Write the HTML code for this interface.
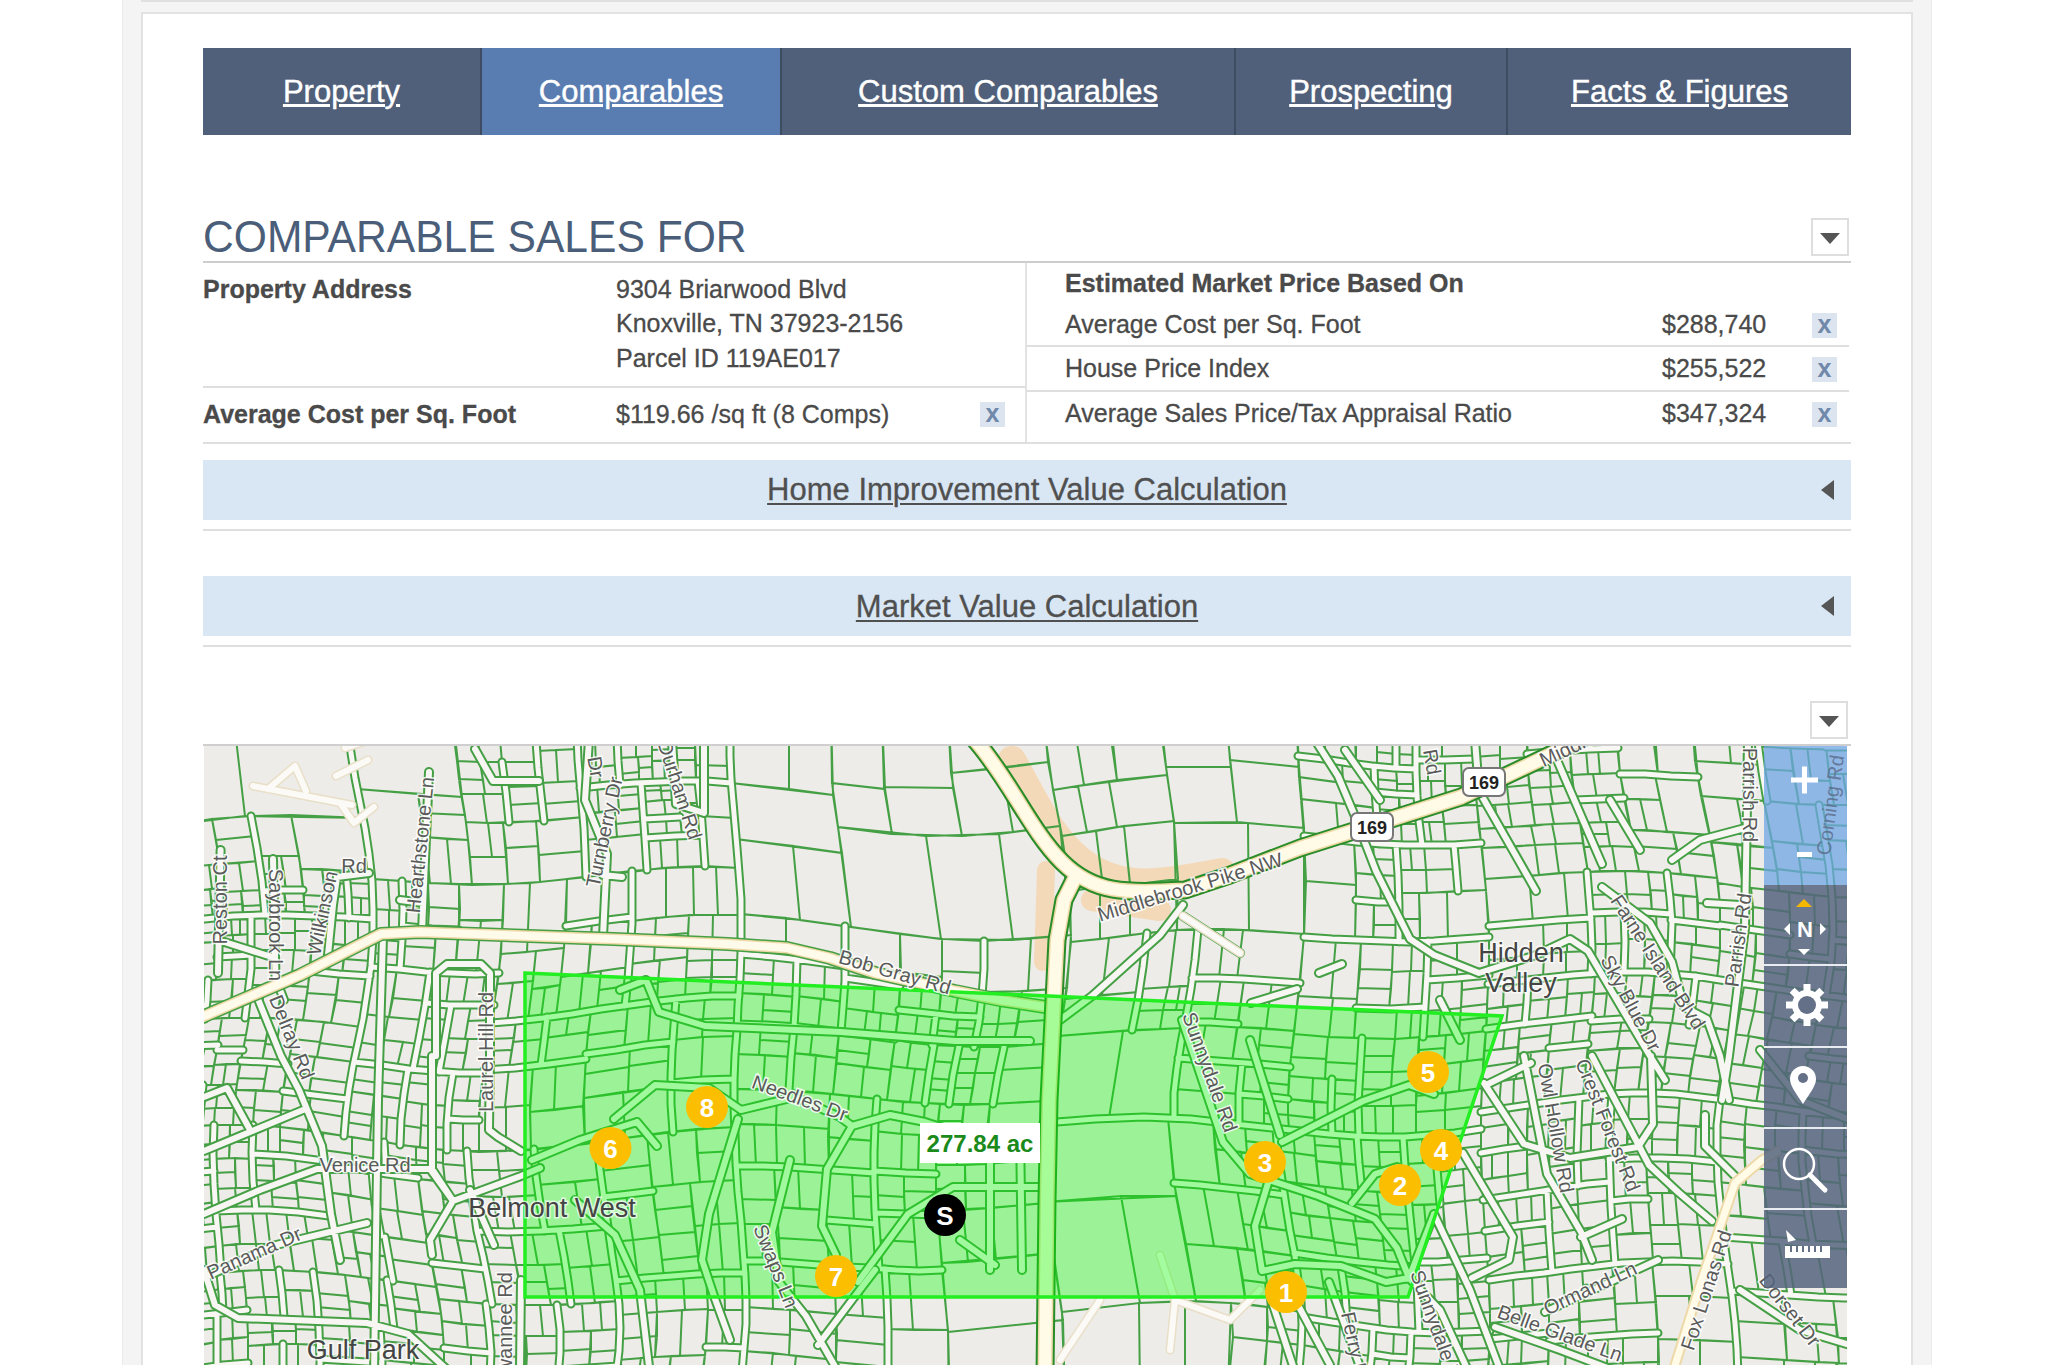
<!DOCTYPE html>
<html><head><meta charset="utf-8">
<style>
html,body{margin:0;padding:0;width:2048px;height:1365px;overflow:hidden;background:#fff;}
body{position:relative;font-family:"Liberation Sans",sans-serif;}
.a{position:absolute;}
.t{position:absolute;white-space:nowrap;line-height:1;}
.tab{position:absolute;top:48px;height:87px;background:#50607a;}
.tab span{position:absolute;left:0;right:0;top:27.5px;-webkit-text-stroke:0.4px #fff;text-align:center;font-size:31px;line-height:1;color:#fff;text-decoration:underline;text-decoration-thickness:2.5px;text-underline-offset:2px;}
.lbl{font-size:25px;color:#4a4a4a;-webkit-text-stroke:0.3px #4a4a4a;}
.b{font-weight:bold;}
.xb{position:absolute;width:25px;height:25px;background:#dbe4ef;}
.xb:after{content:"x";position:absolute;left:0;right:0;top:-1px;text-align:center;font:bold 25px/1 "Liberation Sans",sans-serif;color:#7088aa;}
.hl{position:absolute;height:2px;background:#dfdfdf;}
.acc{position:absolute;left:203px;width:1648px;height:60px;background:#d9e6f3;}
.acc span{position:absolute;left:0;right:0;top:0;text-align:center;font-size:31px;line-height:1;color:#505050;-webkit-text-stroke:0.3px #505050;text-decoration:underline;text-decoration-thickness:2px;text-underline-offset:3px;}
.acc i{position:absolute;left:1618px;top:20px;width:0;height:0;border-top:10px solid transparent;border-bottom:10px solid transparent;border-right:13px solid #555;}
.dd{position:absolute;width:34px;height:34px;border:2px solid #dedede;background:#fff;}
.dd:after{content:"";position:absolute;left:7px;top:13px;border-left:10px solid transparent;border-right:10px solid transparent;border-top:11px solid #555;}
</style></head>
<body>
<!-- outer frame -->
<div class="a" style="left:122px;top:0;width:1808px;height:1365px;background:#f4f4f4;border-left:1px solid #ebebeb;border-right:1px solid #ebebeb;"></div>
<div class="a" style="left:141px;top:0;width:1772px;height:2px;background:#e0e0e0;"></div>
<div class="a" style="left:141px;top:12px;width:1768px;height:1360px;background:#fff;border:2px solid #e2e2e2;"></div>

<!-- tabs -->
<div class="tab" style="left:203px;width:277px;"><span>Property</span></div>
<div class="a" style="left:480px;top:48px;width:2px;height:87px;background:#3e4c62;"></div>
<div class="tab" style="left:482px;width:298px;background:#5a7db1;"><span>Comparables</span></div>
<div class="a" style="left:780px;top:48px;width:2px;height:87px;background:#3e4c62;"></div>
<div class="tab" style="left:782px;width:452px;"><span>Custom Comparables</span></div>
<div class="a" style="left:1234px;top:48px;width:2px;height:87px;background:#3e4c62;"></div>
<div class="tab" style="left:1236px;width:270px;"><span>Prospecting</span></div>
<div class="a" style="left:1506px;top:48px;width:2px;height:87px;background:#3e4c62;"></div>
<div class="tab" style="left:1508px;width:343px;"><span>Facts &amp; Figures</span></div>

<!-- heading -->
<div class="t" style="left:203px;top:214.7px;font-size:44.6px;color:#4a5e7a;transform:scaleX(0.955);transform-origin:0 0;">COMPARABLE SALES FOR</div>
<div class="dd" style="left:1811px;top:218px;"></div>
<div class="hl" style="left:203px;top:261px;width:1648px;background:#cdcdcd;"></div>

<!-- left table -->
<div class="t lbl b" style="left:203px;top:276.5px;">Property Address</div>
<div class="t lbl" style="left:616px;top:276.5px;">9304 Briarwood Blvd</div>
<div class="t lbl" style="left:616px;top:311px;">Knoxville, TN 37923-2156</div>
<div class="t lbl" style="left:616px;top:345.5px;">Parcel ID 119AE017</div>
<div class="hl" style="left:203px;top:386px;width:823px;"></div>
<div class="t lbl b" style="left:203px;top:401.5px;">Average Cost per Sq. Foot</div>
<div class="t lbl" style="left:616px;top:401.5px;">$119.66 /sq ft (8 Comps)</div>
<div class="xb" style="left:980px;top:402px;"></div>
<div class="a" style="left:1025px;top:263px;width:2px;height:180px;background:#e2e2e2;"></div>

<!-- right table -->
<div class="t lbl b" style="left:1065px;top:271px;">Estimated Market Price Based On</div>
<div class="t lbl" style="left:1065px;top:312px;">Average Cost per Sq. Foot</div>
<div class="t lbl" style="left:1662px;top:312px;">$288,740</div>
<div class="xb" style="left:1812px;top:313px;"></div>
<div class="hl" style="left:1027px;top:345px;width:822px;"></div>
<div class="t lbl" style="left:1065px;top:356px;">House Price Index</div>
<div class="t lbl" style="left:1662px;top:356px;">$255,522</div>
<div class="xb" style="left:1812px;top:357px;"></div>
<div class="hl" style="left:1027px;top:390px;width:822px;"></div>
<div class="t lbl" style="left:1065px;top:400.5px;">Average Sales Price/Tax Appraisal Ratio</div>
<div class="t lbl" style="left:1662px;top:400.5px;">$347,324</div>
<div class="xb" style="left:1812px;top:402px;"></div>
<div class="hl" style="left:203px;top:442px;width:1648px;"></div>

<!-- accordions -->
<div class="acc" style="top:460px;"><span style="top:14px;">Home Improvement Value Calculation</span><i></i></div>
<div class="hl" style="left:203px;top:529px;width:1648px;"></div>
<div class="acc" style="top:576px;"><span style="top:14.5px;">Market Value Calculation</span><i></i></div>
<div class="hl" style="left:203px;top:645px;width:1648px;"></div>

<div class="dd" style="left:1810px;top:701px;"></div>
<div class="hl" style="left:203px;top:744px;width:1648px;background:#cfcfcf;"></div>

<!-- map -->
<!--MAPSTART-->
<svg class="a" style="left:0;top:0" width="2048" height="1365" viewBox="0 0 2048 1365">
<defs><clipPath id="mc"><rect x="204" y="746" width="1643" height="619"/></clipPath></defs>
<g clip-path="url(#mc)">
<rect x="204" y="746" width="1643" height="619" fill="#eeece8"/>
<path d="M1012 760C1035 800 1052 842 1088 866S1160 884 1222 872" stroke="#f3d9b8" stroke-width="28" fill="none" stroke-linecap="round"/>
<path d="M1046 870L1043 962" stroke="#f3d9b8" stroke-width="18" fill="none" stroke-linecap="round"/>
<path d="M1092 900L1160 910" stroke="#f3d9b8" stroke-width="22" fill="none" stroke-linecap="round"/>
<path d="M153 707L231 696L245 816L162 826ZM231 696L346 699L363 818L245 816ZM162 826L192 822L200 866L169 869ZM192 822L212 819L220 864L200 866ZM212 819L251 816L255 836L216 840ZM216 840L255 836L259 861L220 864ZM169 869L191 867L194 891L173 893ZM191 867L209 865L212 889L194 891ZM209 865L221 864L225 888L212 889ZM173 893L184 892L186 908L174 909ZM184 892L195 891L197 907L186 908ZM174 909L197 907L198 919L175 921ZM195 891L210 889L212 905L197 906ZM197 906L212 905L213 918L198 919ZM210 889L225 888L226 900L211 901ZM211 901L226 900L227 917L213 918ZM221 864L239 863L243 891L225 892ZM239 863L259 861L263 890L243 891ZM225 892L241 891L242 904L226 905ZM226 905L242 904L243 916L227 917ZM241 891L263 890L265 905L243 906ZM243 906L265 905L265 915L243 916ZM251 816L291 815L299 856L259 856ZM259 856L281 856L284 874L261 874ZM261 874L284 874L286 890L263 891ZM281 856L299 856L303 890L286 890ZM263 891L284 890L286 904L265 904ZM265 904L286 904L286 915L265 915ZM284 890L303 890L304 902L285 902ZM285 902L304 902L305 915L286 915ZM291 815L363 818L371 872L301 869ZM301 869L322 869L325 896L304 895ZM322 869L346 871L347 884L324 882ZM324 882L347 884L348 897L325 896ZM304 895L322 896L323 907L304 906ZM304 906L323 907L323 916L305 915ZM322 896L334 896L335 917L323 916ZM334 896L348 897L349 918L335 917ZM346 871L371 872L372 884L347 883ZM347 883L372 884L373 899L348 897ZM348 897L361 898L361 918L349 918ZM361 898L373 899L373 919L361 918ZM175 921L194 919L195 943L177 945ZM194 919L216 918L217 932L194 934ZM194 934L217 932L217 942L195 943ZM177 945L190 944L190 964L177 965ZM190 944L198 943L198 963L190 964ZM177 965L198 963L198 981L176 983ZM198 943L217 942L217 963L198 965ZM198 965L217 963L216 980L198 981ZM216 918L231 917L232 935L217 936ZM231 917L240 916L240 935L232 935ZM240 916L251 916L251 934L240 935ZM217 936L233 935L233 956L217 957ZM233 935L251 934L251 946L233 947ZM233 947L251 946L251 955L233 956ZM217 957L232 956L231 979L216 980ZM232 956L251 955L250 979L231 979ZM176 983L208 980L207 1003L175 1005ZM175 1005L207 1003L205 1019L173 1021ZM208 980L233 979L231 1001L207 1002ZM207 1002L231 1001L229 1018L205 1019ZM233 979L250 979L248 996L232 997ZM232 997L248 996L245 1018L229 1018ZM251 916L265 915L266 934L251 934ZM265 915L278 915L278 934L266 934ZM251 934L278 934L278 950L251 950ZM278 915L295 915L295 933L278 933ZM278 933L295 933L295 950L278 950ZM295 915L312 916L312 931L295 931ZM295 931L312 931L311 951L295 950ZM251 950L276 950L276 968L251 968ZM251 968L276 968L274 985L249 985ZM276 950L294 950L291 986L274 985ZM294 950L311 951L308 987L291 986ZM249 985L265 985L260 1018L245 1018ZM265 985L282 985L277 1018L260 1018ZM282 985L308 987L306 1001L280 999ZM280 999L306 1001L303 1020L277 1018ZM312 916L327 916L327 943L312 943ZM327 916L345 917L345 945L327 943ZM312 943L331 944L329 973L310 971ZM331 944L345 945L342 974L329 973ZM345 917L358 918L358 946L345 945ZM358 918L373 919L372 947L358 946ZM345 945L372 947L371 961L344 959ZM344 959L371 961L370 976L342 974ZM310 971L339 974L336 995L307 993ZM307 993L336 995L331 1023L303 1020ZM339 974L370 976L366 1003L336 1000ZM336 1000L366 1003L361 1027L331 1023ZM173 1021L197 1019L193 1046L169 1048ZM197 1019L222 1018L220 1031L195 1032ZM195 1032L220 1031L218 1045L193 1046ZM169 1048L195 1046L192 1065L167 1066ZM167 1066L180 1065L178 1087L164 1088ZM180 1065L192 1065L189 1086L178 1087ZM195 1046L205 1046L201 1066L192 1067ZM205 1046L218 1045L214 1066L201 1066ZM192 1067L214 1066L211 1085L189 1086ZM222 1018L249 1018L246 1035L219 1036ZM219 1036L246 1035L243 1050L217 1050ZM217 1050L243 1050L240 1064L214 1065ZM214 1065L226 1064L223 1085L211 1085ZM226 1064L240 1064L237 1084L223 1085ZM164 1088L183 1087L181 1108L163 1110ZM183 1087L203 1085L200 1106L181 1108ZM163 1110L180 1108L179 1128L162 1129ZM180 1108L200 1106L199 1126L179 1128ZM203 1085L218 1085L216 1108L200 1109ZM218 1085L237 1084L234 1108L216 1108ZM200 1109L215 1108L214 1125L199 1126ZM215 1108L234 1108L233 1125L214 1125ZM249 1018L270 1018L266 1041L245 1040ZM245 1040L266 1041L262 1062L241 1061ZM270 1018L281 1019L276 1045L265 1044ZM281 1019L297 1020L292 1046L276 1045ZM265 1044L292 1046L288 1064L262 1062ZM241 1061L268 1062L265 1079L238 1078ZM238 1078L265 1079L263 1091L236 1090ZM268 1062L288 1064L283 1092L263 1091ZM236 1090L256 1090L254 1108L234 1107ZM234 1107L254 1108L253 1125L233 1125ZM256 1090L283 1092L281 1112L254 1110ZM254 1110L281 1112L280 1127L253 1125ZM297 1020L324 1022L320 1042L293 1039ZM293 1039L320 1042L317 1057L290 1054ZM324 1022L361 1027L357 1048L320 1043ZM320 1043L357 1048L354 1062L317 1057ZM290 1054L315 1057L312 1075L286 1072ZM286 1072L312 1075L309 1094L283 1091ZM315 1057L354 1062L350 1083L311 1078ZM311 1078L350 1083L347 1099L309 1094ZM283 1091L311 1094L309 1113L281 1110ZM281 1110L309 1113L308 1130L280 1127ZM311 1094L347 1099L345 1117L309 1111ZM309 1111L345 1117L344 1136L308 1130ZM346 699L452 711L462 797L357 789ZM357 789L418 794L430 883L372 879ZM418 794L462 797L465 815L421 813ZM421 813L465 815L468 840L425 837ZM425 837L447 839L451 884L430 883ZM447 839L468 840L472 885L451 884ZM452 711L466 712L468 739L454 738ZM466 712L479 713L481 739L468 739ZM479 713L499 713L500 740L481 739ZM454 738L478 739L480 762L457 761ZM478 739L500 740L502 762L480 762ZM499 713L535 713L536 738L500 739ZM500 739L536 738L538 762L502 762ZM457 761L480 762L483 780L459 779ZM459 779L483 780L485 794L461 794ZM480 762L502 762L506 794L485 794ZM461 794L483 794L487 823L466 822ZM483 794L506 794L509 822L487 823ZM502 762L538 762L540 786L505 787ZM505 787L540 786L542 803L507 805ZM507 805L542 803L544 821L509 822ZM535 713L576 711L576 730L536 732ZM536 732L576 730L577 749L537 751ZM537 751L556 750L558 782L540 783ZM556 750L577 749L580 781L558 782ZM540 783L580 781L581 801L542 804ZM542 804L581 801L583 817L544 821ZM466 822L488 823L492 857L470 857ZM488 823L503 823L506 857L492 857ZM470 857L506 857L508 884L472 885ZM503 823L536 821L538 846L506 848ZM506 848L538 846L540 882L508 884ZM536 821L583 817L585 851L539 855ZM539 855L585 851L586 877L540 882ZM576 711L594 710L594 739L577 740ZM594 710L620 708L620 725L594 727ZM594 727L620 725L620 737L594 739ZM620 708L636 707L636 736L620 737ZM636 707L652 706L652 720L636 721ZM636 721L652 720L652 735L636 736ZM577 740L595 739L596 767L579 768ZM595 739L617 737L618 765L596 767ZM579 768L599 767L600 786L580 788ZM599 767L618 765L620 785L600 786ZM617 737L636 736L636 757L618 758ZM636 736L652 735L652 756L636 757ZM618 758L638 757L639 772L619 774ZM619 774L639 772L639 783L620 785ZM638 757L652 756L652 767L639 768ZM639 768L652 767L653 782L639 783ZM652 706L664 705L664 722L652 723ZM664 705L677 705L676 722L664 722ZM652 723L665 722L665 736L652 736ZM665 722L676 722L676 735L665 736ZM677 705L696 704L695 735L676 735ZM652 736L673 735L673 749L652 750ZM652 750L673 749L673 760L652 761ZM673 735L695 735L695 748L673 748ZM673 748L695 748L695 760L673 760ZM652 761L664 761L665 782L653 782ZM664 761L676 760L677 781L665 782ZM676 760L695 760L696 781L677 781ZM696 704L713 704L712 742L695 742ZM713 704L731 705L730 743L712 742ZM695 742L730 743L730 766L696 765ZM696 765L730 766L731 783L696 781ZM580 788L597 786L599 812L583 814ZM597 786L617 785L619 810L599 812ZM617 785L641 783L642 794L618 796ZM618 796L642 794L643 808L619 810ZM583 814L615 811L617 837L585 840ZM615 811L643 808L644 821L616 824ZM616 824L644 821L645 834L617 837ZM585 840L645 834L647 870L586 877ZM641 783L660 782L661 790L642 791ZM642 791L661 790L662 800L643 802ZM660 782L678 781L678 790L661 791ZM661 791L678 790L679 800L662 800ZM643 802L664 800L666 818L644 819ZM664 800L679 800L680 817L666 818ZM644 819L666 818L667 836L645 838ZM666 818L680 817L682 836L667 836ZM678 781L698 781L700 803L679 803ZM679 803L700 803L703 835L682 836ZM645 838L660 837L662 868L647 870ZM660 837L677 836L678 867L662 868ZM677 836L703 835L705 866L678 867ZM698 781L731 783L734 818L701 816ZM701 816L734 818L739 868L705 866ZM372 879L388 880L390 910L373 909ZM388 880L402 881L403 911L390 910ZM373 909L389 910L389 937L373 936ZM389 910L403 911L402 938L389 937ZM373 936L402 938L401 955L372 953ZM372 953L401 955L400 969L371 967ZM402 881L412 882L413 909L403 908ZM412 882L428 883L429 910L413 909ZM403 908L429 910L428 928L403 926ZM428 883L459 884L460 909L429 907ZM429 907L460 909L459 930L428 928ZM403 926L436 929L435 948L402 946ZM402 946L435 948L433 972L400 969ZM436 929L459 930L455 973L433 972ZM459 884L504 884L503 920L459 920ZM459 920L481 921L476 974L455 973ZM481 921L503 920L499 973L476 974ZM371 967L397 969L389 1017L364 1014ZM397 969L430 972L426 1001L393 998ZM393 998L426 1001L423 1020L389 1017ZM364 1014L388 1017L383 1046L358 1042ZM358 1042L383 1046L378 1065L354 1062ZM388 1017L423 1020L418 1044L384 1040ZM384 1040L403 1042L397 1067L378 1065ZM403 1042L418 1044L413 1069L397 1067ZM430 972L450 973L446 1005L426 1003ZM450 973L468 974L463 1005L446 1005ZM468 974L485 974L481 1005L463 1005ZM485 974L499 973L494 1005L481 1005ZM426 1003L451 1005L449 1020L423 1018ZM423 1018L449 1020L445 1041L419 1039ZM419 1039L445 1041L441 1059L415 1056ZM415 1056L441 1059L439 1072L413 1069ZM451 1005L471 1005L465 1039L445 1038ZM471 1005L494 1005L492 1020L468 1021ZM468 1021L492 1020L489 1039L465 1039ZM445 1038L468 1039L466 1053L442 1052ZM442 1052L466 1053L462 1073L439 1072ZM468 1039L489 1039L483 1073L462 1073ZM354 1062L383 1065L379 1083L351 1079ZM351 1079L379 1083L377 1095L348 1091ZM383 1065L408 1069L405 1085L379 1082ZM379 1082L405 1085L403 1099L377 1095ZM348 1091L374 1095L372 1115L346 1111ZM346 1111L372 1115L371 1126L345 1122ZM345 1122L371 1126L370 1140L344 1136ZM374 1095L403 1099L401 1119L372 1115ZM372 1115L387 1117L386 1142L370 1140ZM387 1117L401 1119L400 1145L386 1142ZM408 1069L435 1071L433 1085L406 1082ZM406 1082L433 1085L430 1105L403 1101ZM435 1071L453 1073L449 1106L430 1105ZM403 1101L422 1104L421 1128L401 1125ZM401 1125L421 1128L420 1147L400 1145ZM422 1104L435 1105L434 1127L421 1125ZM435 1105L449 1106L447 1128L434 1127ZM421 1125L435 1127L435 1149L420 1147ZM435 1127L447 1128L447 1150L435 1149ZM453 1073L471 1073L467 1101L449 1100ZM471 1073L483 1073L480 1101L467 1101ZM449 1100L480 1101L479 1120L448 1119ZM448 1119L463 1120L463 1151L447 1150ZM463 1120L479 1120L479 1152L463 1151ZM504 884L530 883L527 952L501 954ZM530 883L567 879L564 948L527 952ZM501 954L536 951L533 981L497 984ZM497 984L513 983L507 1022L491 1023ZM513 983L533 981L528 1020L507 1022ZM536 951L564 948L560 985L532 989ZM532 989L545 988L541 1018L528 1020ZM545 988L560 985L556 1016L541 1018ZM567 879L632 871L632 917L566 926ZM566 926L592 922L588 973L561 977ZM592 922L632 917L631 938L591 943ZM591 943L631 938L629 967L588 973ZM561 977L583 974L579 1013L556 1016ZM583 974L601 971L597 1010L579 1013ZM601 971L629 967L627 986L599 990ZM599 990L627 986L625 1006L597 1010ZM632 871L666 868L666 917L632 921ZM666 868L693 867L694 915L666 917ZM693 867L716 867L718 915L694 915ZM716 867L739 868L741 915L718 915ZM632 921L656 918L654 961L629 964ZM656 918L689 915L688 933L655 936ZM655 936L688 933L687 957L654 961ZM629 964L660 960L658 983L627 987ZM627 987L658 983L657 1001L625 1006ZM660 960L687 957L686 979L658 982ZM658 982L686 979L685 998L657 1001ZM689 915L713 915L712 960L687 961ZM713 915L741 915L741 960L712 960ZM687 961L712 960L712 977L686 978ZM686 978L712 977L710 996L685 998ZM712 960L741 960L740 977L711 977ZM711 977L740 977L739 996L710 996ZM491 1023L516 1021L514 1038L489 1039ZM489 1039L514 1038L512 1050L487 1051ZM487 1051L512 1050L509 1068L484 1070ZM516 1021L547 1017L544 1039L513 1042ZM513 1042L544 1039L541 1065L509 1068ZM547 1017L569 1014L566 1035L544 1038ZM569 1014L591 1011L588 1032L566 1035ZM544 1038L588 1032L586 1059L541 1065ZM484 1070L509 1068L505 1107L479 1108ZM509 1068L533 1066L530 1105L505 1107ZM479 1108L506 1107L506 1151L479 1152ZM506 1107L530 1105L531 1150L506 1151ZM533 1066L556 1063L554 1110L530 1112ZM556 1063L586 1059L583 1106L554 1110ZM530 1112L583 1106L585 1144L531 1150ZM591 1011L628 1005L626 1030L588 1035ZM588 1035L626 1030L624 1049L586 1054ZM628 1005L651 1002L648 1045L624 1049ZM651 1002L676 999L673 1042L648 1045ZM586 1054L630 1048L629 1067L585 1074ZM585 1074L629 1067L628 1092L584 1098ZM630 1048L673 1042L672 1060L629 1066ZM629 1066L672 1060L671 1086L628 1092ZM584 1098L623 1092L625 1138L585 1144ZM623 1092L671 1086L673 1132L625 1138ZM676 999L705 997L703 1019L674 1022ZM674 1022L703 1019L702 1037L673 1040ZM705 997L739 996L738 1018L703 1019ZM703 1019L738 1018L736 1036L702 1037ZM673 1040L703 1037L701 1080L671 1083ZM703 1037L736 1036L734 1079L701 1080ZM671 1083L703 1080L704 1129L673 1132ZM703 1080L734 1079L734 1127L704 1129ZM162 1129L177 1128L177 1152L161 1154ZM177 1128L192 1126L191 1151L177 1152ZM161 1154L191 1151L191 1173L161 1176ZM192 1126L214 1125L213 1144L191 1145ZM191 1145L213 1144L213 1159L191 1161ZM191 1161L213 1159L214 1171L191 1173ZM161 1176L191 1173L192 1196L162 1200ZM162 1200L192 1196L193 1211L163 1215ZM163 1215L193 1211L194 1230L164 1234ZM191 1173L214 1171L214 1184L192 1186ZM192 1186L214 1184L215 1202L193 1205ZM193 1205L202 1204L204 1229L194 1230ZM202 1204L215 1202L217 1227L204 1229ZM164 1234L179 1232L180 1257L166 1260ZM179 1232L191 1230L193 1255L180 1257ZM166 1260L193 1255L195 1276L168 1280ZM191 1230L217 1227L219 1246L193 1249ZM193 1249L205 1248L207 1274L195 1276ZM205 1248L219 1246L221 1273L207 1274ZM214 1125L230 1125L229 1158L213 1159ZM230 1125L253 1125L253 1142L230 1142ZM230 1142L253 1142L253 1159L229 1158ZM213 1159L235 1158L235 1172L214 1173ZM214 1173L235 1172L236 1188L214 1189ZM235 1158L253 1159L254 1188L236 1188ZM214 1189L235 1188L237 1210L216 1211ZM235 1188L254 1188L256 1210L237 1210ZM253 1125L268 1126L268 1155L252 1154ZM268 1126L280 1127L280 1156L268 1155ZM280 1127L304 1130L303 1143L280 1140ZM280 1140L303 1143L303 1158L280 1156ZM304 1130L323 1133L324 1161L303 1158ZM252 1154L273 1155L274 1166L253 1165ZM253 1165L274 1166L274 1181L253 1180ZM273 1155L295 1157L296 1183L274 1181ZM253 1180L271 1181L273 1211L256 1210ZM271 1181L296 1183L298 1199L272 1197ZM272 1197L298 1199L299 1213L273 1211ZM295 1157L324 1161L325 1184L296 1180ZM296 1180L325 1184L327 1200L298 1197ZM298 1197L327 1200L329 1216L299 1213ZM216 1211L237 1210L239 1226L217 1228ZM217 1228L239 1226L240 1244L219 1246ZM237 1210L252 1210L256 1244L240 1244ZM219 1246L236 1244L239 1271L221 1273ZM236 1244L256 1244L259 1270L239 1271ZM252 1210L266 1210L270 1244L256 1244ZM266 1210L286 1211L290 1245L270 1244ZM256 1244L271 1244L275 1270L259 1270ZM271 1244L290 1245L294 1271L275 1270ZM286 1211L304 1213L308 1238L289 1236ZM304 1213L329 1216L332 1240L308 1238ZM289 1236L312 1238L317 1272L294 1271ZM312 1238L332 1240L338 1274L317 1272ZM323 1133L352 1137L352 1154L323 1150ZM323 1150L352 1154L353 1168L324 1164ZM352 1137L384 1142L385 1160L352 1155ZM352 1155L385 1160L385 1173L353 1168ZM384 1142L416 1147L416 1160L384 1155ZM384 1155L416 1160L418 1178L385 1173ZM324 1164L348 1167L351 1196L326 1192ZM348 1167L372 1171L375 1200L351 1196ZM326 1192L348 1195L353 1232L331 1229ZM348 1195L375 1200L381 1236L353 1232ZM372 1171L394 1175L398 1211L376 1208ZM394 1175L418 1178L423 1215L398 1211ZM376 1208L397 1211L402 1239L381 1236ZM397 1211L423 1215L428 1243L402 1239ZM331 1229L353 1232L358 1259L335 1257ZM335 1257L358 1259L361 1277L338 1274ZM353 1232L385 1237L389 1257L356 1252ZM356 1252L370 1254L375 1279L361 1277ZM370 1254L389 1257L393 1281L375 1279ZM385 1237L428 1243L432 1265L389 1259ZM389 1259L432 1265L436 1287L393 1281ZM168 1280L185 1278L186 1301L169 1304ZM185 1278L199 1276L201 1299L186 1301ZM169 1304L201 1299L201 1316L169 1321ZM199 1276L220 1273L222 1289L200 1292ZM200 1292L222 1289L222 1302L201 1304ZM201 1304L222 1302L223 1313L201 1316ZM220 1273L243 1271L245 1287L222 1289ZM222 1289L231 1288L233 1312L223 1313ZM231 1288L245 1287L247 1310L233 1312ZM169 1321L195 1317L195 1334L170 1338ZM170 1338L195 1334L195 1346L169 1350ZM195 1317L217 1314L217 1328L195 1331ZM195 1331L217 1328L217 1342L195 1346ZM169 1350L185 1347L185 1371L169 1373ZM185 1347L197 1345L197 1369L185 1371ZM197 1345L217 1342L217 1366L197 1369ZM217 1314L232 1312L233 1338L217 1340ZM232 1312L247 1310L248 1337L233 1338ZM217 1340L232 1339L233 1364L217 1366ZM232 1339L248 1337L248 1363L233 1364ZM169 1373L191 1370L190 1401L167 1405ZM191 1370L214 1367L214 1383L191 1386ZM191 1386L214 1383L213 1398L190 1401ZM214 1367L230 1365L229 1396L213 1398ZM230 1365L248 1363L248 1394L229 1396ZM243 1271L261 1270L264 1297L246 1298ZM261 1270L279 1270L283 1297L264 1297ZM246 1298L265 1297L267 1317L247 1318ZM265 1297L283 1297L284 1317L267 1317ZM279 1270L313 1272L315 1291L282 1290ZM282 1290L300 1290L303 1317L284 1317ZM300 1290L315 1291L318 1318L303 1317ZM247 1318L272 1317L273 1332L248 1333ZM248 1333L273 1332L273 1344L248 1346ZM272 1317L295 1317L296 1331L272 1331ZM272 1331L296 1331L296 1344L273 1344ZM295 1317L318 1318L319 1330L296 1329ZM296 1329L319 1330L320 1345L296 1344ZM248 1346L264 1345L264 1366L248 1367ZM264 1345L283 1344L283 1366L264 1366ZM248 1367L263 1366L263 1393L248 1394ZM263 1366L283 1366L283 1393L263 1393ZM283 1344L298 1344L298 1367L283 1367ZM298 1344L320 1345L320 1367L298 1367ZM283 1367L298 1367L297 1392L283 1393ZM298 1367L320 1367L320 1393L297 1392ZM313 1272L345 1275L348 1296L316 1293ZM316 1293L348 1296L350 1310L317 1307ZM317 1307L350 1310L351 1325L319 1322ZM345 1275L368 1278L373 1304L349 1301ZM368 1278L387 1280L391 1306L373 1304ZM349 1301L369 1304L372 1327L351 1325ZM369 1304L391 1306L394 1329L372 1327ZM387 1280L415 1284L418 1300L389 1296ZM389 1296L418 1300L420 1312L391 1308ZM415 1284L436 1287L441 1314L420 1312ZM391 1308L415 1311L417 1332L394 1329ZM415 1311L441 1314L443 1335L417 1332ZM319 1322L349 1324L350 1340L320 1338ZM320 1338L350 1340L350 1360L320 1359ZM349 1324L380 1327L381 1345L350 1342ZM350 1342L381 1345L382 1363L350 1360ZM320 1359L347 1360L347 1374L320 1372ZM320 1372L347 1374L346 1394L320 1393ZM347 1360L382 1363L382 1379L347 1376ZM347 1376L382 1379L381 1397L346 1394ZM380 1327L413 1331L414 1344L381 1341ZM381 1341L414 1344L414 1363L382 1360ZM413 1331L443 1335L444 1350L414 1347ZM414 1347L444 1350L444 1366L414 1363ZM382 1360L411 1363L411 1378L382 1375ZM382 1375L411 1378L410 1399L381 1397ZM411 1363L444 1366L444 1383L411 1380ZM411 1380L444 1383L442 1402L410 1399ZM416 1147L443 1150L443 1163L416 1160ZM416 1160L443 1163L445 1182L418 1179ZM443 1150L467 1151L468 1166L443 1164ZM443 1164L468 1166L470 1184L445 1182ZM418 1179L441 1181L445 1214L422 1211ZM441 1181L470 1184L473 1202L443 1199ZM443 1199L473 1202L475 1217L445 1214ZM422 1211L453 1215L457 1238L426 1234ZM426 1234L439 1235L444 1264L432 1263ZM439 1235L457 1238L463 1267L444 1264ZM453 1215L475 1217L480 1242L457 1240ZM457 1240L480 1242L485 1269L463 1267ZM432 1263L461 1266L465 1288L436 1284ZM436 1284L465 1288L467 1302L439 1299ZM461 1266L485 1269L492 1304L467 1302ZM467 1151L497 1151L499 1170L469 1170ZM469 1170L499 1170L502 1197L472 1196ZM497 1151L534 1149L535 1169L499 1171ZM499 1171L535 1169L539 1195L502 1197ZM472 1196L493 1197L499 1232L478 1231ZM493 1197L509 1197L515 1232L499 1232ZM509 1197L539 1195L545 1231L515 1232ZM534 1149L597 1142L601 1179L537 1185ZM537 1185L575 1182L582 1228L545 1231ZM575 1182L601 1179L608 1226L582 1228ZM478 1231L510 1232L513 1248L481 1247ZM481 1247L513 1248L516 1265L484 1264ZM484 1264L516 1265L520 1283L488 1282ZM488 1282L520 1283L523 1305L492 1304ZM510 1232L532 1232L538 1265L516 1265ZM532 1232L559 1230L565 1264L538 1265ZM516 1265L544 1265L547 1282L519 1282ZM519 1282L547 1282L551 1305L523 1305ZM544 1265L565 1264L569 1288L548 1289ZM548 1289L569 1288L571 1304L551 1305ZM559 1230L586 1228L592 1266L566 1268ZM586 1228L608 1226L614 1264L592 1266ZM566 1268L590 1266L595 1303L571 1304ZM590 1266L614 1264L618 1301L595 1303ZM439 1299L459 1301L462 1324L442 1321ZM459 1301L486 1304L489 1326L462 1324ZM442 1321L466 1324L468 1351L444 1348ZM466 1324L489 1326L491 1353L468 1351ZM444 1348L471 1351L471 1380L444 1378ZM471 1351L491 1353L490 1381L471 1380ZM444 1378L467 1380L465 1404L442 1402ZM467 1380L490 1381L488 1405L465 1404ZM486 1304L516 1305L518 1323L489 1321ZM489 1321L518 1323L519 1336L490 1335ZM516 1305L540 1305L543 1336L519 1336ZM540 1305L557 1305L560 1336L543 1336ZM490 1335L526 1336L526 1357L491 1356ZM491 1356L526 1357L526 1373L490 1372ZM526 1336L560 1336L560 1353L527 1354ZM527 1354L560 1353L559 1372L526 1373ZM490 1372L504 1372L501 1405L488 1405ZM504 1372L524 1373L520 1405L501 1405ZM524 1373L540 1372L536 1405L520 1405ZM540 1372L559 1372L554 1404L536 1405ZM557 1305L582 1304L584 1331L560 1332ZM582 1304L600 1302L602 1330L584 1331ZM600 1302L618 1301L620 1329L602 1330ZM560 1332L591 1331L591 1349L560 1351ZM560 1351L591 1349L589 1368L559 1370ZM591 1331L620 1329L619 1350L590 1352ZM590 1352L619 1350L618 1366L589 1368ZM559 1370L590 1368L588 1386L557 1388ZM557 1388L588 1386L585 1402L554 1404ZM590 1368L618 1366L615 1384L588 1385ZM588 1385L615 1384L612 1400L585 1402ZM597 1142L647 1135L650 1165L600 1171ZM600 1171L650 1165L653 1191L603 1197ZM603 1197L626 1194L633 1240L610 1242ZM626 1194L653 1191L659 1237L633 1240ZM610 1242L633 1240L638 1279L616 1281ZM633 1240L659 1237L664 1277L638 1279ZM647 1135L668 1132L673 1185L652 1187ZM668 1132L696 1129L700 1182L673 1185ZM696 1129L734 1127L735 1151L697 1153ZM697 1153L735 1151L737 1180L700 1182ZM652 1187L690 1183L692 1206L655 1210ZM655 1210L692 1206L695 1232L659 1235ZM659 1235L695 1232L698 1256L662 1260ZM662 1260L698 1256L700 1274L664 1277ZM690 1183L715 1181L719 1224L695 1226ZM715 1181L737 1180L741 1223L719 1224ZM695 1226L719 1224L723 1273L700 1274ZM719 1224L741 1223L745 1273L723 1273ZM616 1281L655 1277L656 1294L618 1297ZM618 1297L656 1294L657 1312L619 1315ZM619 1315L657 1312L657 1336L620 1339ZM620 1339L657 1336L655 1357L618 1360ZM655 1277L683 1275L685 1310L657 1312ZM683 1275L706 1273L708 1309L685 1310ZM657 1312L682 1310L680 1356L655 1357ZM682 1310L708 1309L705 1355L680 1356ZM618 1360L641 1358L635 1398L612 1400ZM641 1358L671 1356L665 1397L635 1398ZM671 1356L705 1355L703 1374L669 1375ZM669 1375L703 1374L699 1396L665 1397ZM706 1273L724 1273L725 1310L708 1310ZM724 1273L745 1273L746 1310L725 1310ZM708 1310L724 1310L722 1347L706 1347ZM724 1310L746 1310L744 1348L722 1347ZM706 1347L744 1348L742 1370L703 1369ZM703 1369L742 1370L738 1397L699 1396ZM731 705L789 709L789 789L731 783ZM789 709L831 714L833 795L789 789ZM731 783L833 795L842 853L736 839ZM736 839L793 846L800 920L741 914ZM793 846L842 853L851 927L800 920ZM831 714L882 718L885 789L832 783ZM832 783L885 789L892 834L838 827ZM882 718L948 717L953 788L884 787ZM884 787L953 788L962 836L892 834ZM948 717L1043 706L1048 762L951 773ZM951 773L1002 768L1013 832L962 836ZM1002 768L1048 762L1060 826L1013 832ZM838 827L926 836L941 939L851 927ZM926 836L999 834L1013 940L941 939ZM999 834L1060 826L1071 935L1013 940ZM741 914L786 918L786 958L741 954ZM786 918L845 926L845 966L786 958ZM741 954L774 957L773 975L740 973ZM740 973L773 975L772 995L739 993ZM774 957L797 959L796 997L772 995ZM739 993L764 994L762 1024L737 1024ZM764 994L796 997L795 1012L763 1010ZM763 1010L795 1012L794 1027L762 1024ZM797 959L825 963L824 999L796 996ZM825 963L845 966L844 1002L824 999ZM796 996L821 999L818 1029L794 1027ZM821 999L844 1002L841 1032L818 1029ZM845 926L900 934L900 986L845 978ZM845 978L875 982L873 1012L843 1008ZM875 982L900 986L898 1015L873 1012ZM843 1008L867 1011L864 1035L841 1032ZM867 1011L881 1013L879 1037L864 1035ZM881 1013L898 1015L895 1039L879 1037ZM737 1024L761 1024L759 1055L735 1054ZM761 1024L794 1027L793 1042L760 1040ZM760 1040L793 1042L792 1057L759 1055ZM735 1054L765 1055L763 1089L734 1089ZM765 1055L792 1057L789 1090L763 1089ZM794 1027L813 1029L810 1055L792 1053ZM813 1029L839 1032L837 1058L810 1055ZM792 1053L816 1055L813 1092L789 1090ZM816 1055L837 1058L833 1094L813 1092ZM839 1032L871 1036L869 1054L837 1050ZM837 1050L869 1054L867 1067L836 1063ZM871 1036L895 1039L891 1070L867 1067ZM836 1063L864 1067L861 1097L833 1094ZM864 1067L891 1070L887 1100L861 1097ZM900 934L942 939L942 977L901 972ZM901 972L923 975L920 1013L899 1010ZM923 975L942 977L939 1015L920 1013ZM942 939L984 941L984 973L942 971ZM942 971L984 973L982 997L941 994ZM941 994L958 996L955 1016L939 1015ZM958 996L982 997L980 1017L955 1016ZM899 1010L918 1012L914 1043L895 1040ZM918 1012L936 1014L932 1045L914 1043ZM936 1014L958 1016L956 1032L934 1030ZM934 1030L956 1032L954 1046L932 1045ZM958 1016L980 1017L977 1029L957 1028ZM957 1028L977 1029L974 1047L954 1046ZM984 941L1031 938L1028 991L983 992ZM1031 938L1071 935L1067 988L1028 991ZM983 992L1002 992L998 1024L978 1024ZM1002 992L1022 991L1017 1023L998 1024ZM978 1024L998 1024L994 1047L974 1047ZM998 1024L1017 1023L1013 1046L994 1047ZM1022 991L1067 988L1062 1019L1018 1022ZM1018 1022L1062 1019L1056 1043L1013 1046ZM895 1040L911 1042L907 1068L891 1066ZM911 1042L934 1045L929 1070L907 1068ZM891 1066L915 1069L910 1102L887 1100ZM915 1069L929 1070L925 1103L910 1102ZM934 1045L959 1046L956 1063L931 1061ZM931 1061L956 1063L953 1080L928 1078ZM928 1078L953 1080L951 1091L926 1089ZM926 1089L951 1091L949 1104L925 1103ZM959 1046L980 1047L978 1059L956 1059ZM956 1059L978 1059L975 1073L954 1073ZM980 1047L1004 1047L999 1073L975 1073ZM954 1073L975 1073L973 1088L951 1088ZM951 1088L973 1088L970 1104L949 1104ZM975 1073L999 1073L993 1104L970 1104ZM1004 1047L1056 1043L1051 1067L999 1070ZM999 1070L1051 1067L1045 1101L993 1104ZM734 1089L777 1090L776 1125L734 1124ZM734 1124L754 1124L756 1166L736 1166ZM754 1124L776 1125L777 1166L756 1166ZM777 1090L830 1094L829 1129L776 1125ZM776 1125L804 1127L805 1168L777 1166ZM804 1127L829 1129L829 1169L805 1168ZM830 1094L849 1096L847 1139L828 1137ZM849 1096L877 1099L874 1141L847 1139ZM828 1137L874 1141L874 1173L829 1169ZM736 1166L774 1166L776 1200L739 1199ZM739 1199L776 1200L778 1224L741 1224ZM741 1224L761 1224L763 1261L744 1261ZM761 1224L778 1224L780 1262L763 1261ZM774 1166L798 1167L800 1209L776 1207ZM798 1167L824 1169L826 1210L800 1209ZM776 1207L826 1210L828 1241L779 1238ZM779 1238L828 1241L829 1265L780 1262ZM824 1169L852 1171L854 1222L826 1220ZM852 1171L874 1173L874 1197L853 1196ZM853 1196L874 1197L876 1224L854 1222ZM826 1220L849 1222L852 1267L829 1265ZM849 1222L876 1224L879 1269L852 1267ZM877 1099L903 1102L901 1134L874 1131ZM903 1102L925 1103L923 1135L901 1134ZM925 1103L940 1104L937 1136L923 1135ZM874 1131L902 1134L901 1173L874 1171ZM902 1134L919 1135L918 1173L901 1173ZM919 1135L937 1136L936 1174L918 1173ZM874 1171L904 1173L904 1197L874 1195ZM874 1195L904 1197L905 1214L875 1213ZM904 1173L936 1174L936 1192L904 1191ZM904 1191L936 1192L938 1215L905 1214ZM875 1213L913 1214L915 1242L877 1240ZM877 1240L915 1242L917 1270L879 1269ZM913 1214L938 1215L942 1270L917 1270ZM744 1261L772 1262L773 1309L746 1307ZM772 1262L793 1263L795 1310L773 1309ZM793 1263L834 1266L835 1289L794 1285ZM794 1285L835 1289L836 1314L795 1310ZM834 1266L860 1268L863 1316L836 1314ZM860 1268L885 1269L888 1318L863 1316ZM746 1307L790 1310L790 1335L745 1332ZM745 1332L790 1335L789 1355L744 1351ZM790 1310L836 1314L837 1334L790 1329ZM790 1329L837 1334L836 1360L789 1355ZM744 1351L773 1353L768 1400L738 1397ZM773 1353L796 1356L791 1402L768 1400ZM796 1356L836 1360L835 1381L794 1376ZM794 1376L835 1381L832 1407L791 1402ZM836 1314L888 1318L888 1345L836 1340ZM836 1340L888 1345L888 1367L836 1362ZM836 1362L864 1365L861 1411L832 1407ZM864 1365L888 1367L886 1413L861 1411ZM885 1269L909 1270L913 1330L888 1329ZM909 1270L942 1270L948 1330L913 1330ZM888 1329L948 1330L949 1367L888 1366ZM888 1366L949 1367L949 1416L886 1413ZM940 1104L964 1105L962 1121L938 1121ZM938 1121L962 1121L961 1139L937 1138ZM964 1105L990 1104L986 1138L961 1139ZM937 1138L957 1139L957 1165L936 1165ZM957 1139L986 1138L986 1164L957 1165ZM936 1165L965 1165L965 1188L936 1189ZM936 1189L965 1188L966 1209L937 1210ZM965 1165L986 1164L988 1208L966 1209ZM990 1104L1045 1101L1043 1159L986 1164ZM986 1164L1043 1159L1046 1203L988 1208ZM937 1210L963 1210L968 1262L942 1263ZM963 1210L991 1208L996 1259L968 1262ZM991 1208L1046 1203L1053 1253L996 1259ZM942 1263L1053 1253L1063 1320L948 1332ZM948 1332L1063 1320L1065 1404L949 1416ZM1043 706L1108 697L1110 732L1046 741ZM1046 741L1076 737L1084 785L1053 790ZM1076 737L1110 732L1117 780L1084 785ZM1108 697L1158 693L1167 775L1117 780ZM1053 790L1078 786L1087 832L1062 836ZM1078 786L1109 782L1117 827L1087 832ZM1109 782L1167 775L1174 821L1117 827ZM1062 836L1096 831L1103 887L1070 891ZM1096 831L1124 826L1130 883L1103 887ZM1070 891L1100 887L1100 939L1071 942ZM1100 887L1130 883L1130 935L1100 939ZM1124 826L1174 821L1178 879L1130 885ZM1130 885L1178 879L1177 930L1130 935ZM1158 693L1225 696L1228 739L1162 738ZM1162 738L1228 739L1231 767L1166 767ZM1166 767L1231 767L1237 822L1174 823ZM1225 696L1296 705L1299 767L1230 760ZM1230 760L1299 767L1304 828L1237 822ZM1174 823L1248 823L1249 930L1177 930ZM1248 823L1304 828L1304 934L1249 930ZM1071 942L1109 938L1102 995L1065 999ZM1109 938L1147 933L1139 992L1102 995ZM1065 999L1139 992L1132 1030L1058 1036ZM1147 933L1176 930L1169 987L1140 989ZM1176 930L1198 929L1191 986L1169 987ZM1140 989L1168 987L1163 1010L1136 1011ZM1136 1011L1163 1010L1160 1029L1132 1030ZM1168 987L1180 986L1176 1010L1163 1010ZM1180 986L1191 986L1187 1010L1176 1010ZM1163 1010L1187 1010L1184 1028L1160 1029ZM1058 1036L1123 1031L1109 1118L1043 1123ZM1123 1031L1184 1028L1174 1118L1109 1118ZM1198 929L1224 929L1219 978L1192 978ZM1224 929L1243 930L1237 979L1219 978ZM1243 930L1304 934L1300 983L1237 979ZM1192 978L1221 978L1217 1004L1188 1004ZM1188 1004L1217 1004L1214 1023L1185 1022ZM1221 978L1244 980L1238 1024L1214 1023ZM1185 1022L1206 1022L1200 1059L1178 1058ZM1206 1022L1238 1024L1232 1062L1200 1059ZM1244 980L1272 981L1266 1029L1237 1027ZM1272 981L1300 983L1294 1031L1266 1029ZM1237 1027L1261 1028L1257 1064L1232 1062ZM1261 1028L1294 1031L1292 1048L1259 1045ZM1259 1045L1292 1048L1290 1067L1257 1064ZM1178 1058L1242 1063L1239 1094L1175 1089ZM1175 1089L1239 1094L1239 1124L1174 1118ZM1242 1063L1263 1064L1260 1096L1239 1094ZM1263 1064L1290 1067L1289 1085L1261 1082ZM1261 1082L1289 1085L1288 1099L1260 1096ZM1239 1094L1264 1096L1264 1127L1239 1124ZM1264 1096L1288 1099L1288 1115L1264 1113ZM1264 1113L1288 1115L1289 1130L1264 1127ZM1296 705L1325 709L1325 760L1298 756ZM1325 709L1356 713L1356 764L1325 760ZM1356 713L1375 716L1374 738L1355 735ZM1375 716L1387 717L1386 739L1374 738ZM1387 717L1397 718L1396 740L1386 739ZM1355 735L1377 738L1377 766L1356 764ZM1377 738L1396 740L1396 754L1377 752ZM1377 752L1396 754L1396 768L1377 766ZM1397 718L1417 719L1417 733L1396 732ZM1396 732L1417 733L1416 744L1396 743ZM1396 743L1416 744L1416 755L1396 754ZM1396 754L1416 755L1416 769L1396 768ZM1298 756L1342 762L1343 783L1299 777ZM1299 777L1343 783L1345 804L1301 799ZM1342 762L1374 766L1375 784L1343 781ZM1343 781L1375 784L1376 808L1345 804ZM1301 799L1336 803L1339 840L1304 836ZM1336 803L1355 805L1357 842L1339 840ZM1355 805L1376 808L1379 844L1357 842ZM1374 766L1396 768L1397 781L1374 779ZM1374 779L1397 781L1397 794L1375 792ZM1396 768L1416 769L1417 784L1397 784ZM1397 784L1417 784L1417 795L1397 794ZM1375 792L1399 794L1400 811L1376 809ZM1376 809L1400 811L1401 824L1377 822ZM1399 794L1417 795L1418 808L1399 808ZM1399 808L1418 808L1420 824L1401 824ZM1377 822L1387 823L1389 844L1379 844ZM1387 823L1401 824L1402 845L1389 844ZM1401 824L1420 824L1422 845L1402 845ZM1417 719L1428 719L1427 742L1416 742ZM1428 719L1443 719L1442 742L1427 742ZM1416 742L1442 742L1442 760L1416 760ZM1443 719L1475 717L1474 737L1442 739ZM1442 739L1474 737L1474 759L1442 760ZM1416 760L1428 760L1428 781L1416 781ZM1428 760L1445 760L1445 781L1428 781ZM1416 781L1431 781L1432 806L1418 806ZM1431 781L1445 781L1447 806L1432 806ZM1445 760L1461 759L1462 786L1445 786ZM1461 759L1474 759L1475 785L1462 786ZM1445 786L1461 786L1462 805L1447 806ZM1461 786L1475 785L1477 805L1462 805ZM1418 806L1442 806L1444 822L1419 822ZM1419 822L1429 822L1432 845L1422 845ZM1429 822L1444 822L1446 845L1432 845ZM1442 806L1477 805L1479 822L1444 824ZM1444 824L1479 822L1481 843L1446 845ZM1304 836L1354 841L1356 885L1306 881ZM1306 881L1356 885L1355 940L1304 937ZM1354 841L1373 843L1375 875L1356 873ZM1373 843L1396 845L1397 860L1374 859ZM1374 859L1397 860L1398 876L1375 875ZM1356 873L1380 875L1381 902L1356 900ZM1380 875L1398 876L1399 902L1381 902ZM1356 900L1374 901L1373 941L1355 940ZM1374 901L1399 902L1399 925L1374 925ZM1374 925L1399 925L1399 942L1373 941ZM1396 845L1410 845L1412 870L1397 870ZM1410 845L1424 845L1426 870L1412 870ZM1397 870L1426 870L1427 893L1398 893ZM1424 845L1454 845L1456 869L1426 870ZM1426 870L1456 869L1458 891L1427 893ZM1454 845L1481 843L1486 890L1458 891ZM1398 893L1419 893L1420 919L1399 919ZM1399 919L1420 919L1420 941L1399 942ZM1419 893L1447 892L1448 940L1420 941ZM1447 892L1486 890L1489 937L1448 940ZM1304 937L1336 939L1331 998L1298 996ZM1336 939L1361 941L1357 999L1331 998ZM1298 996L1333 998L1329 1037L1294 1034ZM1333 998L1357 999L1354 1038L1329 1037ZM1361 941L1393 942L1392 970L1360 969ZM1360 969L1392 970L1391 989L1358 988ZM1358 988L1391 989L1389 1009L1356 1008ZM1393 942L1412 941L1411 971L1392 972ZM1412 941L1428 941L1427 971L1411 971ZM1392 972L1410 971L1408 1008L1389 1009ZM1410 971L1427 971L1425 1007L1408 1008ZM1356 1008L1397 1009L1395 1039L1354 1038ZM1397 1009L1412 1008L1410 1038L1395 1039ZM1412 1008L1425 1007L1423 1037L1410 1038ZM1428 941L1457 939L1457 959L1427 961ZM1427 961L1457 959L1457 978L1427 980ZM1457 939L1489 937L1489 975L1457 978ZM1427 980L1443 979L1441 1010L1425 1011ZM1443 979L1462 978L1461 1008L1441 1010ZM1425 1011L1441 1010L1439 1036L1423 1037ZM1441 1010L1461 1008L1459 1034L1439 1036ZM1462 978L1489 975L1488 987L1462 990ZM1462 990L1488 987L1487 1004L1461 1007ZM1461 1007L1487 1004L1487 1017L1460 1020ZM1460 1020L1487 1017L1486 1031L1459 1034ZM1294 1034L1328 1037L1326 1059L1291 1057ZM1291 1057L1326 1059L1325 1079L1289 1076ZM1328 1037L1362 1038L1360 1064L1326 1062ZM1326 1062L1360 1064L1359 1081L1325 1079ZM1289 1076L1313 1078L1312 1101L1288 1099ZM1313 1078L1332 1079L1331 1103L1312 1101ZM1288 1099L1314 1102L1314 1118L1288 1115ZM1288 1115L1314 1118L1315 1133L1289 1130ZM1314 1102L1331 1103L1332 1134L1315 1133ZM1332 1079L1359 1081L1359 1095L1332 1093ZM1332 1093L1359 1095L1358 1112L1331 1110ZM1331 1110L1344 1111L1344 1135L1332 1134ZM1344 1111L1358 1112L1359 1136L1344 1135ZM1362 1038L1395 1039L1393 1056L1361 1056ZM1361 1056L1393 1056L1392 1072L1360 1072ZM1395 1039L1419 1037L1417 1071L1392 1072ZM1360 1072L1392 1072L1391 1090L1359 1089ZM1359 1089L1391 1090L1391 1106L1358 1106ZM1392 1072L1417 1071L1417 1089L1391 1090ZM1391 1090L1417 1089L1416 1105L1391 1106ZM1358 1106L1375 1106L1376 1137L1359 1136ZM1375 1106L1393 1106L1393 1137L1376 1137ZM1393 1106L1416 1105L1416 1136L1393 1137ZM1419 1037L1446 1035L1445 1048L1419 1050ZM1419 1050L1445 1048L1444 1062L1418 1064ZM1418 1064L1444 1062L1443 1078L1417 1080ZM1417 1080L1443 1078L1442 1093L1416 1096ZM1446 1035L1469 1033L1467 1061L1444 1064ZM1469 1033L1486 1031L1484 1059L1467 1061ZM1444 1064L1461 1062L1459 1091L1442 1093ZM1461 1062L1484 1059L1482 1088L1459 1091ZM1416 1096L1446 1093L1445 1110L1416 1112ZM1416 1112L1445 1110L1445 1134L1416 1136ZM1446 1093L1482 1088L1481 1106L1445 1110ZM1445 1110L1481 1106L1481 1129L1445 1134ZM1043 1123L1168 1118L1176 1196L1046 1202ZM1046 1202L1121 1196L1140 1303L1062 1312ZM1121 1196L1176 1196L1196 1301L1140 1303ZM1168 1118L1213 1121L1220 1187L1174 1183ZM1213 1121L1245 1125L1247 1153L1215 1149ZM1245 1125L1276 1129L1278 1145L1246 1141ZM1246 1141L1278 1145L1279 1157L1247 1153ZM1215 1149L1241 1152L1246 1190L1220 1187ZM1241 1152L1279 1157L1281 1174L1243 1169ZM1243 1169L1281 1174L1284 1195L1246 1190ZM1174 1183L1203 1185L1214 1246L1186 1244ZM1203 1185L1237 1189L1248 1250L1214 1246ZM1237 1189L1260 1192L1267 1228L1243 1224ZM1260 1192L1284 1195L1290 1231L1267 1228ZM1243 1224L1290 1231L1295 1256L1248 1250ZM1186 1244L1237 1248L1246 1304L1196 1301ZM1237 1248L1262 1251L1267 1283L1243 1280ZM1262 1251L1295 1256L1297 1272L1265 1268ZM1265 1268L1297 1272L1299 1288L1267 1283ZM1243 1280L1265 1283L1268 1307L1246 1304ZM1265 1283L1299 1288L1302 1312L1268 1307ZM1062 1312L1139 1303L1140 1393L1065 1404ZM1139 1303L1185 1301L1185 1389L1140 1393ZM1185 1301L1231 1303L1228 1389L1185 1389ZM1231 1303L1267 1307L1267 1341L1233 1337ZM1267 1307L1302 1312L1302 1331L1268 1327ZM1268 1327L1302 1331L1302 1345L1267 1341ZM1233 1337L1267 1341L1262 1391L1228 1389ZM1267 1341L1283 1343L1280 1372L1265 1370ZM1283 1343L1302 1345L1299 1374L1280 1372ZM1265 1370L1299 1374L1296 1395L1262 1391ZM1276 1129L1293 1130L1295 1153L1278 1151ZM1293 1130L1314 1133L1316 1156L1295 1153ZM1278 1151L1294 1153L1297 1183L1282 1181ZM1294 1153L1316 1156L1319 1186L1297 1183ZM1314 1133L1339 1135L1340 1147L1315 1145ZM1315 1145L1340 1147L1342 1164L1316 1161ZM1339 1135L1357 1136L1359 1165L1342 1164ZM1316 1161L1340 1163L1343 1189L1319 1186ZM1340 1163L1359 1165L1362 1191L1343 1189ZM1357 1136L1378 1137L1380 1167L1359 1166ZM1378 1137L1403 1137L1404 1152L1379 1152ZM1379 1152L1404 1152L1405 1167L1380 1167ZM1359 1166L1383 1167L1386 1192L1362 1191ZM1383 1167L1405 1167L1407 1193L1386 1192ZM1282 1181L1301 1184L1306 1215L1287 1212ZM1301 1184L1325 1187L1330 1218L1306 1215ZM1287 1212L1309 1216L1312 1238L1291 1235ZM1309 1216L1330 1218L1334 1241L1312 1238ZM1291 1235L1334 1241L1337 1259L1294 1253ZM1325 1187L1352 1190L1354 1209L1328 1206ZM1328 1206L1354 1209L1356 1221L1330 1218ZM1352 1190L1377 1192L1379 1206L1353 1204ZM1353 1204L1379 1206L1381 1223L1356 1221ZM1330 1218L1353 1221L1357 1245L1334 1242ZM1334 1242L1357 1245L1359 1262L1337 1259ZM1353 1221L1381 1223L1383 1241L1356 1238ZM1356 1238L1383 1241L1386 1265L1359 1262ZM1377 1192L1407 1193L1409 1215L1380 1214ZM1380 1214L1409 1215L1411 1229L1382 1228ZM1382 1228L1411 1229L1413 1251L1384 1250ZM1384 1250L1413 1251L1415 1267L1386 1265ZM1294 1253L1319 1257L1324 1289L1299 1285ZM1319 1257L1340 1260L1345 1292L1324 1289ZM1299 1285L1325 1289L1327 1321L1302 1317ZM1325 1289L1345 1292L1347 1324L1327 1321ZM1340 1260L1375 1264L1377 1280L1343 1276ZM1343 1276L1377 1280L1378 1296L1345 1292ZM1345 1292L1378 1296L1379 1311L1346 1307ZM1346 1307L1379 1311L1380 1329L1347 1324ZM1375 1264L1396 1266L1399 1302L1379 1300ZM1396 1266L1415 1267L1418 1303L1399 1302ZM1379 1300L1398 1302L1399 1331L1380 1329ZM1398 1302L1418 1303L1419 1332L1399 1331ZM1403 1137L1422 1136L1423 1163L1405 1164ZM1422 1136L1436 1135L1437 1162L1423 1163ZM1405 1164L1437 1162L1439 1185L1407 1187ZM1407 1187L1439 1185L1440 1204L1408 1205ZM1436 1135L1454 1133L1455 1170L1438 1172ZM1454 1133L1481 1129L1481 1146L1454 1149ZM1454 1149L1481 1146L1481 1167L1455 1170ZM1438 1172L1463 1169L1464 1185L1439 1188ZM1439 1188L1464 1185L1465 1201L1440 1204ZM1463 1169L1481 1167L1483 1199L1465 1201ZM1408 1205L1424 1205L1427 1239L1412 1239ZM1424 1205L1443 1204L1446 1238L1427 1239ZM1412 1239L1446 1238L1448 1261L1415 1262ZM1443 1204L1465 1201L1468 1234L1445 1236ZM1465 1201L1483 1199L1485 1232L1468 1234ZM1445 1236L1468 1234L1470 1260L1448 1261ZM1468 1234L1485 1232L1487 1258L1470 1260ZM1415 1262L1431 1262L1433 1281L1417 1281ZM1417 1281L1433 1281L1435 1302L1418 1302ZM1431 1262L1456 1261L1457 1279L1433 1280ZM1433 1280L1457 1279L1458 1302L1435 1302ZM1418 1302L1439 1302L1439 1333L1419 1332ZM1439 1302L1458 1302L1459 1333L1439 1333ZM1456 1261L1487 1258L1489 1281L1458 1284ZM1458 1284L1489 1281L1489 1296L1458 1299ZM1458 1299L1489 1296L1490 1312L1459 1314ZM1459 1314L1490 1312L1490 1331L1459 1333ZM1302 1317L1319 1320L1319 1348L1302 1345ZM1319 1320L1340 1323L1339 1351L1319 1348ZM1340 1323L1357 1325L1356 1354L1339 1351ZM1357 1325L1373 1328L1371 1356L1356 1354ZM1302 1345L1340 1351L1337 1373L1299 1368ZM1299 1368L1315 1370L1311 1397L1296 1395ZM1315 1370L1337 1373L1333 1401L1311 1397ZM1340 1351L1356 1354L1353 1379L1337 1377ZM1356 1354L1371 1356L1368 1382L1353 1379ZM1337 1377L1368 1382L1365 1405L1333 1401ZM1373 1328L1394 1330L1393 1357L1372 1354ZM1394 1330L1411 1332L1410 1358L1393 1357ZM1372 1354L1390 1356L1387 1382L1369 1380ZM1390 1356L1410 1358L1407 1384L1387 1382ZM1369 1380L1390 1382L1386 1407L1365 1405ZM1390 1382L1407 1384L1403 1409L1386 1407ZM1411 1332L1441 1333L1441 1349L1411 1348ZM1411 1348L1441 1349L1440 1364L1409 1363ZM1409 1363L1440 1364L1437 1387L1406 1386ZM1406 1386L1437 1387L1434 1410L1403 1409ZM1441 1333L1462 1332L1461 1361L1440 1361ZM1462 1332L1490 1331L1489 1348L1462 1349ZM1462 1349L1489 1348L1489 1359L1461 1361ZM1440 1361L1465 1361L1463 1380L1438 1381ZM1465 1361L1489 1359L1487 1379L1463 1380ZM1438 1381L1458 1381L1454 1410L1434 1410ZM1458 1381L1487 1379L1486 1391L1457 1392ZM1457 1392L1486 1391L1484 1408L1454 1410ZM1475 717L1489 716L1488 743L1474 744ZM1489 716L1506 714L1505 741L1488 743ZM1506 714L1529 712L1527 739L1505 741ZM1474 744L1500 742L1500 755L1474 757ZM1474 757L1500 755L1500 772L1474 773ZM1500 742L1527 739L1528 757L1500 759ZM1500 759L1528 757L1528 769L1500 772ZM1474 773L1506 771L1507 786L1475 788ZM1475 788L1507 786L1509 804L1477 806ZM1506 771L1528 769L1529 785L1507 787ZM1507 787L1529 785L1532 802L1509 804ZM1477 806L1495 805L1498 828L1479 829ZM1495 805L1508 804L1512 827L1498 828ZM1508 804L1532 802L1535 825L1512 827ZM1529 712L1546 710L1545 735L1527 736ZM1546 710L1558 709L1558 734L1545 735ZM1527 736L1558 734L1558 751L1527 754ZM1558 709L1592 706L1591 727L1558 730ZM1558 730L1591 727L1592 749L1558 751ZM1592 706L1617 704L1618 748L1592 749ZM1527 754L1549 752L1550 770L1528 771ZM1528 771L1550 770L1551 787L1530 788ZM1549 752L1570 751L1571 772L1550 773ZM1550 773L1571 772L1573 785L1551 787ZM1530 788L1550 787L1553 804L1532 805ZM1550 787L1573 785L1575 802L1553 804ZM1532 805L1550 804L1554 824L1535 825ZM1550 804L1575 802L1579 823L1554 824ZM1570 751L1586 749L1588 774L1572 775ZM1586 749L1598 749L1600 774L1588 774ZM1598 749L1618 748L1620 773L1600 774ZM1572 775L1593 774L1597 799L1575 800ZM1593 774L1620 773L1624 798L1597 799ZM1575 800L1596 799L1601 822L1579 823ZM1596 799L1624 798L1629 822L1601 822ZM1479 829L1505 827L1508 847L1482 848ZM1505 827L1531 826L1535 845L1508 847ZM1482 848L1535 845L1539 875L1485 879ZM1531 826L1552 824L1556 844L1535 845ZM1552 824L1580 823L1583 843L1556 844ZM1535 845L1555 844L1559 873L1539 875ZM1555 844L1583 843L1588 872L1559 873ZM1580 823L1606 822L1608 834L1582 834ZM1582 834L1608 834L1610 846L1584 847ZM1606 822L1629 822L1634 847L1610 846ZM1584 847L1596 847L1600 871L1588 872ZM1596 847L1612 846L1616 871L1600 871ZM1612 846L1634 847L1639 871L1616 871ZM1617 704L1632 704L1633 744L1617 745ZM1632 704L1653 704L1654 745L1633 744ZM1617 745L1654 745L1658 775L1620 774ZM1653 704L1691 706L1698 777L1658 775ZM1620 774L1655 775L1660 800L1625 799ZM1625 799L1640 799L1647 830L1631 830ZM1640 799L1660 800L1667 832L1647 830ZM1655 775L1698 777L1710 835L1667 832ZM1631 830L1673 832L1677 849L1634 846ZM1634 846L1677 849L1681 874L1639 871ZM1673 832L1710 835L1714 856L1677 852ZM1677 852L1714 856L1717 878L1681 874ZM1485 879L1529 876L1533 922L1489 926ZM1529 876L1564 873L1568 919L1533 922ZM1564 873L1587 872L1591 918L1568 919ZM1489 926L1543 921L1544 955L1489 960ZM1489 960L1517 958L1517 981L1488 984ZM1517 958L1544 955L1543 978L1517 981ZM1543 921L1567 919L1567 952L1544 954ZM1567 919L1591 918L1592 951L1567 952ZM1544 954L1566 952L1566 976L1543 978ZM1566 952L1592 951L1591 974L1566 976ZM1587 872L1625 871L1627 894L1589 895ZM1589 895L1627 894L1629 912L1591 913ZM1625 871L1648 872L1651 895L1627 894ZM1627 894L1651 895L1652 912L1629 912ZM1648 872L1667 873L1669 891L1650 890ZM1650 890L1669 891L1671 914L1652 912ZM1591 913L1605 912L1606 944L1592 944ZM1605 912L1624 912L1625 943L1606 944ZM1592 944L1606 944L1605 973L1591 974ZM1606 944L1625 943L1624 972L1605 973ZM1624 912L1644 912L1645 939L1625 939ZM1644 912L1656 912L1657 940L1645 939ZM1656 912L1671 914L1672 941L1657 940ZM1625 939L1645 939L1644 972L1624 972ZM1645 939L1672 941L1671 956L1645 955ZM1645 955L1671 956L1670 974L1644 972ZM1667 873L1695 876L1697 897L1670 894ZM1670 894L1683 896L1684 922L1671 920ZM1683 896L1697 897L1698 923L1684 922ZM1695 876L1717 878L1720 905L1698 903ZM1698 903L1720 905L1720 926L1698 923ZM1671 920L1696 923L1696 945L1672 942ZM1696 923L1720 926L1720 948L1696 945ZM1672 942L1692 944L1690 976L1670 974ZM1692 944L1720 948L1719 961L1691 957ZM1691 957L1719 961L1717 979L1690 976ZM1691 706L1726 708L1731 763L1695 761ZM1726 708L1755 710L1760 765L1731 763ZM1695 761L1760 765L1767 801L1701 796ZM1755 710L1787 712L1789 745L1758 743ZM1787 712L1808 713L1811 746L1789 745ZM1808 713L1823 713L1826 746L1811 746ZM1758 743L1790 745L1793 771L1761 769ZM1761 769L1793 771L1799 804L1767 801ZM1790 745L1807 745L1811 780L1795 780ZM1807 745L1826 746L1830 781L1811 780ZM1795 780L1830 781L1834 805L1799 804ZM1823 713L1847 713L1850 747L1826 747ZM1847 713L1863 713L1865 746L1850 747ZM1863 713L1879 712L1881 745L1865 746ZM1826 747L1856 747L1859 774L1829 774ZM1856 747L1881 745L1884 772L1859 774ZM1829 774L1843 774L1848 805L1834 805ZM1843 774L1861 773L1866 805L1848 805ZM1861 773L1884 772L1888 804L1866 805ZM1701 796L1737 799L1746 846L1711 842ZM1737 799L1764 801L1773 848L1746 846ZM1711 842L1737 844L1743 887L1718 883ZM1737 844L1773 848L1777 871L1741 867ZM1741 867L1777 871L1779 891L1743 887ZM1764 801L1796 804L1803 844L1772 841ZM1796 804L1819 805L1826 846L1803 844ZM1772 841L1797 844L1801 872L1777 869ZM1797 844L1826 846L1828 860L1799 857ZM1799 857L1828 860L1830 874L1801 872ZM1777 869L1801 872L1803 894L1779 891ZM1801 872L1830 874L1832 897L1803 894ZM1819 805L1849 805L1853 826L1823 825ZM1823 825L1853 826L1855 841L1825 840ZM1849 805L1873 805L1878 840L1855 841ZM1873 805L1888 804L1893 839L1878 840ZM1825 840L1846 841L1850 870L1830 869ZM1846 841L1859 841L1863 870L1850 870ZM1830 869L1863 870L1865 898L1832 897ZM1859 841L1878 840L1882 871L1863 872ZM1878 840L1893 839L1897 871L1882 871ZM1863 872L1897 871L1898 898L1865 898ZM1718 883L1751 888L1753 909L1720 905ZM1720 905L1753 909L1753 930L1720 925ZM1751 888L1789 892L1790 912L1753 907ZM1753 907L1790 912L1790 935L1753 930ZM1720 925L1740 928L1739 954L1720 951ZM1740 928L1756 930L1755 957L1739 954ZM1720 951L1741 954L1738 982L1717 979ZM1741 954L1755 957L1752 985L1738 982ZM1756 930L1790 935L1789 958L1756 953ZM1756 953L1789 958L1788 975L1754 970ZM1754 970L1788 975L1785 990L1752 985ZM1789 892L1814 895L1815 925L1790 922ZM1814 895L1832 897L1833 927L1815 925ZM1790 922L1814 925L1812 957L1790 954ZM1814 925L1833 927L1831 959L1812 957ZM1790 954L1810 957L1805 993L1785 990ZM1810 957L1831 959L1826 996L1805 993ZM1832 897L1866 898L1866 923L1833 921ZM1833 921L1866 923L1865 943L1832 940ZM1866 898L1898 898L1898 923L1866 923ZM1866 923L1898 923L1897 943L1865 943ZM1832 940L1849 942L1846 970L1830 969ZM1849 942L1868 943L1866 971L1846 970ZM1830 969L1847 970L1843 998L1826 996ZM1847 970L1866 971L1862 999L1843 998ZM1868 943L1897 943L1895 968L1866 968ZM1866 968L1879 968L1875 1000L1862 999ZM1879 968L1895 968L1890 1000L1875 1000ZM1488 984L1504 982L1503 1007L1487 1009ZM1504 982L1528 980L1527 1004L1503 1007ZM1487 1009L1508 1006L1506 1026L1486 1029ZM1508 1006L1527 1004L1525 1024L1506 1026ZM1528 980L1568 976L1567 997L1527 1001ZM1527 1001L1549 999L1547 1021L1525 1024ZM1549 999L1567 997L1565 1019L1547 1021ZM1568 976L1595 973L1594 992L1567 994ZM1567 994L1582 993L1580 1017L1565 1019ZM1582 993L1594 992L1592 1016L1580 1017ZM1486 1029L1505 1026L1503 1049L1484 1051ZM1505 1026L1520 1024L1518 1047L1503 1049ZM1484 1051L1518 1047L1517 1062L1483 1067ZM1483 1067L1517 1062L1516 1079L1482 1084ZM1520 1024L1552 1020L1550 1035L1519 1039ZM1519 1039L1550 1035L1549 1050L1518 1054ZM1518 1054L1531 1052L1529 1077L1516 1079ZM1531 1052L1549 1050L1547 1075L1529 1077ZM1482 1084L1501 1081L1499 1109L1481 1112ZM1501 1081L1514 1079L1513 1107L1499 1109ZM1514 1079L1531 1077L1530 1105L1513 1107ZM1531 1077L1547 1075L1544 1103L1530 1105ZM1552 1020L1575 1018L1572 1046L1549 1048ZM1575 1018L1592 1016L1588 1044L1572 1046ZM1549 1048L1588 1044L1586 1065L1547 1070ZM1547 1070L1563 1068L1560 1100L1544 1103ZM1563 1068L1586 1065L1583 1097L1560 1100ZM1595 973L1627 972L1625 993L1594 994ZM1594 994L1607 993L1604 1020L1591 1021ZM1607 993L1625 993L1622 1019L1604 1020ZM1627 972L1643 972L1640 996L1625 996ZM1643 972L1655 973L1652 997L1640 996ZM1625 996L1652 997L1649 1019L1622 1019ZM1591 1021L1622 1019L1620 1031L1590 1033ZM1590 1033L1620 1031L1617 1049L1588 1051ZM1622 1019L1649 1019L1647 1030L1620 1031ZM1620 1031L1647 1030L1644 1048L1617 1049ZM1588 1051L1620 1048L1617 1070L1585 1072ZM1585 1072L1617 1070L1614 1094L1583 1097ZM1620 1048L1644 1048L1641 1067L1617 1068ZM1617 1068L1641 1067L1638 1093L1614 1094ZM1655 973L1672 974L1669 995L1653 995ZM1672 974L1696 976L1693 998L1669 995ZM1653 995L1676 996L1674 1009L1651 1008ZM1651 1008L1674 1009L1672 1023L1649 1022ZM1676 996L1693 998L1689 1025L1672 1023ZM1696 976L1714 979L1711 1003L1693 1000ZM1714 979L1741 983L1738 1007L1711 1003ZM1693 1000L1713 1003L1708 1027L1689 1025ZM1713 1003L1738 1007L1733 1031L1708 1027ZM1649 1022L1671 1023L1665 1057L1643 1056ZM1671 1023L1700 1026L1696 1046L1668 1043ZM1668 1043L1696 1046L1693 1059L1665 1057ZM1643 1056L1666 1057L1661 1093L1638 1093ZM1666 1057L1693 1059L1690 1076L1663 1073ZM1663 1073L1690 1076L1688 1095L1661 1093ZM1700 1026L1716 1028L1710 1057L1694 1055ZM1716 1028L1733 1031L1727 1060L1710 1057ZM1694 1055L1727 1060L1723 1082L1690 1078ZM1690 1078L1723 1082L1720 1099L1688 1095ZM1741 983L1758 985L1754 1011L1737 1008ZM1758 985L1777 989L1773 1014L1754 1011ZM1737 1008L1754 1011L1748 1036L1732 1034ZM1754 1011L1773 1014L1767 1039L1748 1036ZM1777 989L1798 992L1792 1021L1772 1017ZM1798 992L1822 995L1816 1024L1792 1021ZM1772 1017L1795 1021L1790 1043L1767 1039ZM1795 1021L1816 1024L1812 1046L1790 1043ZM1732 1034L1749 1036L1743 1065L1726 1063ZM1749 1036L1768 1040L1762 1068L1743 1065ZM1726 1063L1762 1068L1759 1087L1723 1082ZM1723 1082L1759 1087L1756 1104L1720 1099ZM1768 1040L1792 1043L1786 1073L1762 1069ZM1792 1043L1812 1046L1805 1076L1786 1073ZM1762 1069L1788 1073L1785 1089L1759 1085ZM1759 1085L1785 1089L1783 1108L1756 1104ZM1788 1073L1805 1076L1800 1111L1783 1108ZM1822 995L1843 998L1837 1028L1816 1025ZM1843 998L1861 999L1855 1029L1837 1028ZM1816 1025L1834 1027L1827 1058L1809 1056ZM1834 1027L1855 1029L1849 1060L1827 1058ZM1861 999L1890 1000L1887 1017L1858 1016ZM1858 1016L1887 1017L1884 1034L1854 1033ZM1854 1033L1872 1034L1866 1062L1849 1060ZM1872 1034L1884 1034L1878 1062L1866 1062ZM1809 1056L1831 1059L1827 1082L1805 1079ZM1831 1059L1844 1060L1840 1084L1827 1082ZM1844 1060L1857 1061L1852 1085L1840 1084ZM1805 1079L1832 1083L1829 1101L1802 1097ZM1802 1097L1829 1101L1828 1114L1800 1111ZM1832 1083L1852 1085L1849 1116L1828 1114ZM1857 1061L1878 1062L1873 1093L1851 1092ZM1851 1092L1873 1093L1871 1117L1849 1116ZM1481 1112L1509 1108L1508 1124L1481 1128ZM1481 1128L1508 1124L1508 1149L1481 1153ZM1509 1108L1528 1105L1527 1146L1508 1149ZM1481 1153L1492 1151L1492 1178L1482 1180ZM1492 1151L1508 1149L1508 1176L1492 1178ZM1482 1180L1508 1176L1509 1196L1483 1200ZM1508 1149L1527 1146L1527 1173L1508 1176ZM1508 1176L1527 1173L1528 1193L1509 1196ZM1528 1105L1549 1102L1549 1124L1527 1127ZM1527 1127L1549 1124L1548 1151L1527 1155ZM1549 1102L1579 1098L1578 1118L1549 1122ZM1549 1122L1566 1120L1565 1149L1548 1151ZM1566 1120L1578 1118L1577 1147L1565 1149ZM1527 1155L1549 1151L1550 1190L1528 1193ZM1549 1151L1577 1147L1577 1163L1549 1167ZM1549 1167L1577 1163L1578 1186L1550 1190ZM1579 1098L1594 1096L1592 1124L1578 1126ZM1594 1096L1612 1094L1610 1122L1592 1124ZM1578 1126L1591 1124L1591 1159L1577 1161ZM1591 1124L1610 1122L1609 1157L1591 1159ZM1577 1161L1609 1157L1610 1182L1578 1186ZM1483 1200L1498 1198L1499 1229L1485 1231ZM1498 1198L1516 1195L1518 1226L1499 1229ZM1516 1195L1531 1193L1532 1224L1518 1226ZM1531 1193L1547 1190L1549 1222L1532 1224ZM1485 1231L1521 1226L1523 1252L1487 1257ZM1487 1257L1523 1252L1525 1275L1489 1280ZM1521 1226L1549 1222L1550 1242L1523 1246ZM1523 1246L1550 1242L1551 1256L1524 1260ZM1524 1260L1551 1256L1552 1272L1525 1275ZM1547 1190L1577 1186L1578 1204L1548 1209ZM1548 1209L1578 1204L1579 1229L1549 1234ZM1577 1186L1610 1182L1611 1200L1578 1204ZM1578 1204L1611 1200L1612 1225L1579 1229ZM1549 1234L1580 1229L1581 1250L1551 1254ZM1551 1254L1581 1250L1582 1267L1552 1272ZM1580 1229L1612 1225L1613 1245L1581 1248ZM1581 1248L1613 1245L1615 1264L1582 1267ZM1612 1094L1630 1093L1628 1119L1610 1120ZM1630 1093L1655 1093L1653 1119L1628 1119ZM1610 1120L1628 1119L1627 1158L1609 1159ZM1628 1119L1653 1119L1652 1138L1627 1139ZM1627 1139L1652 1138L1652 1157L1627 1158ZM1655 1093L1680 1095L1679 1108L1654 1106ZM1654 1106L1679 1108L1678 1123L1653 1122ZM1653 1122L1678 1123L1677 1140L1652 1139ZM1652 1139L1677 1140L1677 1158L1652 1157ZM1680 1095L1702 1097L1700 1127L1678 1125ZM1702 1097L1720 1099L1717 1129L1700 1127ZM1678 1125L1696 1126L1695 1160L1677 1158ZM1696 1126L1717 1129L1717 1162L1695 1160ZM1609 1159L1624 1158L1626 1200L1611 1201ZM1624 1158L1646 1157L1647 1182L1625 1183ZM1625 1183L1647 1182L1648 1199L1626 1200ZM1611 1201L1630 1199L1633 1233L1613 1235ZM1630 1199L1648 1199L1651 1233L1633 1233ZM1613 1235L1651 1233L1653 1261L1615 1264ZM1646 1157L1668 1158L1669 1178L1647 1177ZM1647 1177L1669 1178L1669 1193L1648 1193ZM1668 1158L1692 1159L1692 1174L1668 1173ZM1668 1173L1692 1174L1693 1194L1669 1193ZM1692 1159L1717 1162L1718 1182L1692 1180ZM1692 1180L1718 1182L1719 1196L1693 1194ZM1648 1193L1662 1193L1664 1225L1650 1225ZM1662 1193L1675 1193L1678 1225L1664 1225ZM1650 1225L1678 1225L1680 1244L1652 1244ZM1652 1244L1680 1244L1682 1262L1653 1261ZM1675 1193L1695 1194L1698 1225L1678 1224ZM1695 1194L1719 1196L1723 1226L1698 1225ZM1678 1224L1699 1225L1703 1262L1682 1262ZM1699 1225L1723 1226L1728 1264L1703 1262ZM1489 1280L1513 1277L1514 1307L1490 1309ZM1513 1277L1532 1274L1533 1305L1514 1307ZM1532 1274L1547 1272L1549 1303L1533 1305ZM1490 1309L1521 1306L1522 1320L1490 1323ZM1490 1323L1522 1320L1522 1336L1490 1339ZM1521 1306L1549 1303L1549 1333L1522 1336ZM1490 1339L1509 1337L1507 1365L1488 1366ZM1509 1337L1522 1336L1521 1364L1507 1365ZM1522 1336L1549 1333L1548 1361L1521 1364ZM1488 1366L1513 1364L1509 1407L1484 1408ZM1513 1364L1548 1361L1547 1386L1511 1389ZM1511 1389L1547 1386L1545 1404L1509 1407ZM1547 1272L1563 1270L1565 1304L1549 1306ZM1563 1270L1582 1267L1584 1301L1565 1304ZM1582 1267L1612 1264L1614 1282L1583 1285ZM1583 1285L1614 1282L1615 1298L1584 1301ZM1549 1306L1579 1302L1579 1319L1549 1323ZM1549 1323L1579 1319L1580 1338L1549 1341ZM1579 1302L1615 1298L1616 1319L1580 1322ZM1580 1322L1616 1319L1617 1335L1580 1338ZM1612 1264L1634 1262L1637 1303L1615 1304ZM1634 1262L1652 1262L1656 1302L1637 1303ZM1615 1304L1656 1302L1658 1333L1617 1335ZM1549 1341L1566 1339L1565 1373L1548 1374ZM1566 1339L1588 1337L1588 1371L1565 1373ZM1548 1374L1564 1373L1562 1403L1545 1404ZM1564 1373L1588 1371L1586 1401L1562 1403ZM1588 1337L1608 1336L1607 1364L1588 1365ZM1608 1336L1623 1335L1623 1363L1607 1364ZM1588 1365L1623 1363L1622 1385L1587 1386ZM1587 1386L1622 1385L1621 1399L1586 1401ZM1623 1335L1658 1333L1659 1362L1623 1363ZM1623 1363L1644 1362L1643 1399L1621 1399ZM1644 1362L1659 1362L1658 1399L1643 1399ZM1652 1262L1689 1262L1693 1296L1655 1296ZM1689 1262L1728 1264L1732 1298L1693 1296ZM1655 1296L1689 1296L1692 1340L1658 1339ZM1689 1296L1732 1298L1737 1342L1692 1340ZM1658 1339L1700 1340L1700 1402L1658 1399ZM1700 1340L1737 1342L1737 1404L1700 1402ZM1720 1099L1747 1103L1745 1125L1718 1121ZM1718 1121L1745 1125L1745 1140L1717 1137ZM1717 1137L1745 1140L1745 1158L1717 1155ZM1717 1155L1745 1158L1746 1185L1718 1182ZM1747 1103L1777 1107L1775 1128L1745 1124ZM1745 1124L1775 1128L1775 1151L1744 1147ZM1777 1107L1803 1111L1802 1129L1775 1125ZM1775 1125L1802 1129L1802 1154L1775 1151ZM1744 1147L1778 1151L1779 1171L1745 1167ZM1745 1167L1779 1171L1781 1189L1746 1185ZM1778 1151L1802 1154L1805 1191L1781 1189ZM1718 1182L1738 1184L1741 1216L1721 1215ZM1738 1184L1764 1187L1768 1219L1741 1216ZM1721 1215L1768 1219L1771 1241L1724 1237ZM1764 1187L1805 1191L1808 1216L1767 1213ZM1767 1213L1808 1216L1813 1244L1771 1241ZM1803 1111L1823 1113L1822 1152L1802 1150ZM1823 1113L1844 1115L1844 1154L1822 1152ZM1844 1115L1871 1117L1871 1138L1844 1137ZM1844 1137L1871 1138L1872 1155L1844 1154ZM1802 1150L1818 1152L1820 1181L1804 1180ZM1818 1152L1838 1154L1840 1183L1820 1181ZM1804 1180L1840 1183L1843 1206L1806 1203ZM1838 1154L1872 1155L1874 1176L1839 1175ZM1839 1175L1855 1176L1859 1207L1843 1206ZM1855 1176L1874 1176L1878 1207L1859 1207ZM1806 1203L1837 1206L1844 1246L1813 1244ZM1837 1206L1854 1207L1861 1246L1844 1246ZM1854 1207L1878 1207L1885 1246L1861 1246ZM1724 1237L1751 1239L1759 1293L1731 1291ZM1751 1239L1782 1242L1791 1295L1759 1293ZM1782 1242L1816 1244L1826 1297L1791 1295ZM1816 1244L1846 1246L1855 1298L1826 1297ZM1846 1246L1885 1246L1891 1277L1851 1277ZM1851 1277L1891 1277L1895 1298L1855 1298ZM1731 1291L1781 1295L1785 1324L1735 1321ZM1735 1321L1785 1324L1787 1360L1737 1357ZM1781 1295L1833 1298L1836 1325L1784 1322ZM1784 1322L1816 1324L1819 1362L1787 1360ZM1816 1324L1836 1325L1839 1363L1819 1362ZM1737 1357L1784 1360L1784 1388L1738 1385ZM1738 1385L1784 1388L1784 1408L1737 1404ZM1784 1360L1815 1362L1814 1410L1784 1408ZM1815 1362L1839 1363L1838 1411L1814 1410ZM1833 1298L1859 1298L1864 1338L1838 1338ZM1859 1298L1895 1298L1899 1337L1864 1338ZM1838 1338L1873 1338L1874 1367L1839 1367ZM1873 1338L1899 1337L1900 1366L1874 1367ZM1839 1367L1865 1367L1863 1411L1838 1411ZM1865 1367L1900 1366L1899 1391L1864 1393ZM1864 1393L1899 1391L1897 1410L1863 1411Z" stroke="#45a045" stroke-width="2" fill="none"/>
<path d="M731 705L730 731L730 756L731 779L733 802L735 825L737 848L739 873L741 899L741 925L741 952L740 979L738 1005L737 1030L735 1055L734 1080L734 1107L735 1134L736 1163L738 1192L741 1221L743 1249L745 1275L746 1300L746 1324L744 1348L742 1372L738 1397M346 699L348 726L351 753L355 778L360 803L365 828L369 854L372 881L373 909L373 938L371 966L367 993L363 1019L358 1043L353 1066L349 1089L346 1112L344 1136M175 921L205 919L233 916L260 915L287 915L315 916L344 917L373 919M251 816L257 848L262 881L265 915M195 891L197 905L198 919M263 891L283 890L303 890M346 871L348 894L349 918M251 916L251 942L251 969L248 994L245 1018M217 957L235 956L251 955M208 980L207 1000L205 1019M310 971L339 974L370 976M169 1048L194 1046L218 1045M217 1050L230 1050L243 1050M203 1085L201 1105L199 1126M241 1061L264 1062L288 1064M283 1091L314 1095L347 1099M576 711L577 736L578 760L580 783L582 805L584 828L585 852L586 877M535 713L536 741L538 768L541 795L544 821M502 762L506 792L509 822M580 788L608 785L635 783L660 782L684 781L707 781L731 783M577 740L615 738L652 735M617 737L618 761L620 785M652 736L674 735L695 735M641 783L643 811L645 839L647 870M698 781L701 809L703 837L705 866M645 838L675 836L703 835M644 819L663 818L680 817M354 1062L382 1065L409 1069L434 1071L459 1073L483 1073M371 967L399 969L426 972L451 973L475 974L499 973M402 881L403 910L402 940L400 969M373 936L388 937L402 938M403 926L432 929L459 930M430 972L425 1006L419 1039L413 1069M426 1003L449 1005L472 1005L494 1005M451 1005L445 1039L439 1072M408 1069L404 1094L401 1119L400 1145M453 1073L449 1098L447 1124L447 1150M448 1119L463 1120L479 1120M491 1023L516 1021L543 1018L572 1014L601 1009L630 1005L659 1001L686 998L712 996L739 996M632 871L632 897L632 924L630 952L628 979L625 1006M566 926L599 921L632 917M484 1070L515 1068L549 1064L586 1059M547 1017L544 1042L541 1065M676 999L674 1025L672 1051L671 1077L671 1104L673 1132M586 1054L616 1050L645 1045L673 1042M671 1083L703 1080L734 1079M214 1125L213 1154L214 1184L216 1214L219 1244L221 1273M161 1176L188 1173L214 1171M164 1234L191 1230L217 1227M216 1211L242 1210L269 1210L298 1212L329 1216M253 1125L252 1152L253 1181L256 1210M252 1154L286 1156L324 1161M324 1164L355 1168L387 1174L418 1178M384 1142L385 1158L385 1173M372 1171L375 1204L381 1236M385 1237L389 1259L393 1281M169 1321L196 1316L222 1313L247 1310M220 1273L222 1293L223 1313M169 1373L196 1369L223 1365L248 1363M217 1314L217 1339L217 1366M214 1367L214 1382L213 1398M313 1272L317 1301L319 1330L320 1361L320 1393M279 1270L282 1293L284 1317M283 1344L283 1368L283 1393M387 1280L391 1305L394 1329M380 1327L382 1361L381 1397M320 1359L351 1361L382 1363M597 1142L600 1170L604 1199L608 1227L612 1255L616 1280L619 1304L620 1328L619 1351L616 1375L612 1400M467 1151L469 1178L473 1204L477 1231L483 1256L488 1281L492 1304M432 1263L459 1266L485 1269M478 1231L508 1232L540 1231L573 1229L608 1226M534 1149L536 1176L540 1204L545 1231M559 1230L564 1256L568 1281L571 1304M557 1305L560 1329L560 1353L558 1378L554 1404M486 1304L489 1328L491 1352L490 1378L488 1405M444 1348L468 1351L491 1353M559 1370L588 1368L618 1366M616 1281L645 1278L672 1276L697 1274L721 1273L745 1273M603 1197L629 1194L653 1191M706 1347L725 1347L744 1348M737 1024L767 1025L799 1027L832 1031L865 1035L895 1039M845 926L845 953L845 981L843 1007L841 1032M741 954L774 957L809 961L845 966M797 959L796 994L794 1027M845 978L873 982L900 986M794 1027L791 1058L789 1090M984 941L984 969L982 996L979 1022L974 1047M899 1010L927 1013L953 1016L980 1017M936 1014L934 1030L932 1045M1004 1047L998 1075L993 1104M934 1045L929 1074L925 1103M959 1046L953 1075L949 1104M744 1261L768 1261L793 1263L819 1265L845 1267L871 1268L896 1270L919 1271L942 1270M877 1099L875 1125L874 1152L874 1181L875 1211L877 1240L879 1269M736 1166L763 1166L790 1167L818 1169L847 1171L874 1173M826 1220L851 1222L876 1224M874 1171L906 1173L936 1174M875 1213L907 1214L938 1215M885 1269L887 1299L888 1327L888 1355L888 1384L886 1413M1043 1123L1070 1121L1095 1119L1120 1118L1144 1117L1167 1118L1191 1119L1217 1122L1244 1125L1272 1128L1301 1131L1329 1134L1355 1136L1381 1137L1405 1137L1429 1135L1455 1133L1481 1129M1198 929L1195 960L1191 989L1186 1017L1181 1043L1177 1068L1174 1093L1174 1118M1147 933L1143 967L1138 1000L1132 1030M1178 1058L1204 1060L1231 1062L1260 1064L1290 1067M1192 978L1217 978L1243 979L1271 981L1300 983M1185 1022L1210 1022L1238 1024M1242 1063L1239 1093L1239 1124M1239 1094L1264 1096L1288 1099M1304 937L1332 939L1358 940L1384 941L1409 942L1434 941L1461 939L1489 937M1304 836L1331 839L1357 842L1382 844L1405 845L1429 845L1454 845L1481 843M1417 719L1416 746L1416 772L1417 796L1419 821L1422 845M1298 756L1324 759L1349 763L1372 766L1394 768L1416 769M1397 718L1396 743L1396 768M1374 766L1375 792L1377 817L1379 844M1375 792L1396 794L1417 795M1416 760L1444 760L1474 759M1396 845L1398 875L1399 907L1399 942M1356 900L1378 902L1399 902M1454 845L1456 867L1458 891M1428 941L1427 974L1425 1006L1423 1037M1356 1008L1391 1009L1425 1007M1427 980L1457 978L1489 975M1362 1038L1360 1071L1358 1103L1359 1136M1332 1079L1331 1107L1332 1134M1276 1129L1278 1154L1282 1180L1286 1206L1290 1231L1295 1256L1298 1280L1301 1302L1302 1324L1301 1347L1299 1370L1296 1395M1174 1183L1200 1185L1227 1188L1255 1191L1284 1195M1302 1317L1332 1322L1360 1326L1387 1330L1412 1332L1437 1333L1463 1332L1490 1331M1403 1137L1405 1166L1408 1196L1411 1226L1414 1255L1417 1282L1418 1308L1419 1332M1294 1253L1327 1258L1359 1262L1388 1265L1415 1267M1357 1136L1359 1163L1362 1191M1340 1260L1345 1293L1347 1324M1415 1262L1438 1262L1462 1260L1487 1258M1436 1135L1437 1169L1440 1204M1373 1328L1372 1352L1369 1378L1365 1405M1411 1332L1410 1357L1407 1382L1403 1409M1372 1354L1391 1357L1410 1358M1488 984L1516 981L1545 978L1573 975L1599 973L1624 972L1648 972L1671 974L1695 976L1720 980L1746 984L1773 988L1798 992L1823 995L1846 998L1868 999L1890 1000M1527 754L1559 751L1589 749L1618 748M1575 800L1600 799L1624 798M1620 774L1645 774L1671 776L1698 777M1587 872L1589 897L1591 922L1592 948L1591 974M1489 926L1523 923L1558 920L1591 918M1667 873L1670 898L1672 923L1671 949L1670 974M1591 913L1619 912L1645 912L1671 914M1624 912L1625 942L1624 972M1671 920L1696 923L1720 926M1755 710L1758 742L1762 772L1767 801M1758 743L1793 745L1826 746M1826 747L1854 747L1881 745M1819 805L1824 835L1829 865L1832 897M1832 897L1833 930L1831 963L1826 996M1720 925L1755 930L1790 935M1790 954L1811 957L1831 959M1832 940L1865 943L1897 943M1481 1112L1508 1108L1535 1104L1561 1100L1586 1097L1609 1094L1632 1093L1654 1093L1676 1094L1700 1097L1725 1100L1751 1104L1777 1107L1801 1111L1825 1114L1848 1116L1871 1117M1741 983L1737 1007L1733 1030L1728 1053L1724 1076L1720 1099M1486 1029L1522 1024L1558 1020L1592 1016M1528 980L1527 1002L1525 1024M1549 1048L1569 1046L1588 1044M1591 1021L1621 1019L1649 1019M1696 976L1693 1001L1689 1025M1809 1056L1833 1059L1856 1061L1878 1062M1720 1099L1717 1125L1717 1153L1718 1182L1721 1212L1724 1241L1728 1269L1732 1296L1735 1323L1737 1349L1738 1376L1737 1404M1489 1280L1516 1276L1544 1273L1571 1269L1597 1266L1622 1263L1647 1262L1672 1261L1699 1262L1728 1264M1612 1094L1610 1121L1609 1149L1610 1178L1611 1207L1613 1236L1615 1264M1483 1200L1510 1196L1536 1192L1562 1188L1587 1184L1610 1182M1481 1153L1504 1149L1527 1146M1579 1098L1578 1126L1577 1155L1578 1186M1547 1190L1549 1232L1552 1272M1485 1231L1517 1226L1549 1222M1609 1159L1635 1158L1661 1158L1688 1159L1717 1162M1611 1201L1629 1199L1648 1199M1490 1339L1519 1336L1549 1333M1549 1341L1578 1338L1605 1336L1632 1334L1658 1333M1724 1237L1752 1239L1781 1241L1808 1244L1835 1245L1860 1246L1885 1246M1803 1111L1802 1136L1802 1162L1805 1189L1808 1216L1813 1244M1802 1150L1837 1154L1872 1155M1731 1291L1760 1293L1789 1295L1818 1297L1844 1298L1870 1298L1895 1298M1782 1242L1787 1269L1791 1295M1839 1367L1870 1367L1900 1366" stroke="#45a045" stroke-width="9" fill="none" stroke-linejoin="round" stroke-linecap="round"/>
<path d="M731 705L730 731L730 756L731 779L733 802L735 825L737 848L739 873L741 899L741 925L741 952L740 979L738 1005L737 1030L735 1055L734 1080L734 1107L735 1134L736 1163L738 1192L741 1221L743 1249L745 1275L746 1300L746 1324L744 1348L742 1372L738 1397M346 699L348 726L351 753L355 778L360 803L365 828L369 854L372 881L373 909L373 938L371 966L367 993L363 1019L358 1043L353 1066L349 1089L346 1112L344 1136M175 921L205 919L233 916L260 915L287 915L315 916L344 917L373 919M251 816L257 848L262 881L265 915M195 891L197 905L198 919M263 891L283 890L303 890M346 871L348 894L349 918M251 916L251 942L251 969L248 994L245 1018M217 957L235 956L251 955M208 980L207 1000L205 1019M310 971L339 974L370 976M169 1048L194 1046L218 1045M217 1050L230 1050L243 1050M203 1085L201 1105L199 1126M241 1061L264 1062L288 1064M283 1091L314 1095L347 1099M576 711L577 736L578 760L580 783L582 805L584 828L585 852L586 877M535 713L536 741L538 768L541 795L544 821M502 762L506 792L509 822M580 788L608 785L635 783L660 782L684 781L707 781L731 783M577 740L615 738L652 735M617 737L618 761L620 785M652 736L674 735L695 735M641 783L643 811L645 839L647 870M698 781L701 809L703 837L705 866M645 838L675 836L703 835M644 819L663 818L680 817M354 1062L382 1065L409 1069L434 1071L459 1073L483 1073M371 967L399 969L426 972L451 973L475 974L499 973M402 881L403 910L402 940L400 969M373 936L388 937L402 938M403 926L432 929L459 930M430 972L425 1006L419 1039L413 1069M426 1003L449 1005L472 1005L494 1005M451 1005L445 1039L439 1072M408 1069L404 1094L401 1119L400 1145M453 1073L449 1098L447 1124L447 1150M448 1119L463 1120L479 1120M491 1023L516 1021L543 1018L572 1014L601 1009L630 1005L659 1001L686 998L712 996L739 996M632 871L632 897L632 924L630 952L628 979L625 1006M566 926L599 921L632 917M484 1070L515 1068L549 1064L586 1059M547 1017L544 1042L541 1065M676 999L674 1025L672 1051L671 1077L671 1104L673 1132M586 1054L616 1050L645 1045L673 1042M671 1083L703 1080L734 1079M214 1125L213 1154L214 1184L216 1214L219 1244L221 1273M161 1176L188 1173L214 1171M164 1234L191 1230L217 1227M216 1211L242 1210L269 1210L298 1212L329 1216M253 1125L252 1152L253 1181L256 1210M252 1154L286 1156L324 1161M324 1164L355 1168L387 1174L418 1178M384 1142L385 1158L385 1173M372 1171L375 1204L381 1236M385 1237L389 1259L393 1281M169 1321L196 1316L222 1313L247 1310M220 1273L222 1293L223 1313M169 1373L196 1369L223 1365L248 1363M217 1314L217 1339L217 1366M214 1367L214 1382L213 1398M313 1272L317 1301L319 1330L320 1361L320 1393M279 1270L282 1293L284 1317M283 1344L283 1368L283 1393M387 1280L391 1305L394 1329M380 1327L382 1361L381 1397M320 1359L351 1361L382 1363M597 1142L600 1170L604 1199L608 1227L612 1255L616 1280L619 1304L620 1328L619 1351L616 1375L612 1400M467 1151L469 1178L473 1204L477 1231L483 1256L488 1281L492 1304M432 1263L459 1266L485 1269M478 1231L508 1232L540 1231L573 1229L608 1226M534 1149L536 1176L540 1204L545 1231M559 1230L564 1256L568 1281L571 1304M557 1305L560 1329L560 1353L558 1378L554 1404M486 1304L489 1328L491 1352L490 1378L488 1405M444 1348L468 1351L491 1353M559 1370L588 1368L618 1366M616 1281L645 1278L672 1276L697 1274L721 1273L745 1273M603 1197L629 1194L653 1191M706 1347L725 1347L744 1348M737 1024L767 1025L799 1027L832 1031L865 1035L895 1039M845 926L845 953L845 981L843 1007L841 1032M741 954L774 957L809 961L845 966M797 959L796 994L794 1027M845 978L873 982L900 986M794 1027L791 1058L789 1090M984 941L984 969L982 996L979 1022L974 1047M899 1010L927 1013L953 1016L980 1017M936 1014L934 1030L932 1045M1004 1047L998 1075L993 1104M934 1045L929 1074L925 1103M959 1046L953 1075L949 1104M744 1261L768 1261L793 1263L819 1265L845 1267L871 1268L896 1270L919 1271L942 1270M877 1099L875 1125L874 1152L874 1181L875 1211L877 1240L879 1269M736 1166L763 1166L790 1167L818 1169L847 1171L874 1173M826 1220L851 1222L876 1224M874 1171L906 1173L936 1174M875 1213L907 1214L938 1215M885 1269L887 1299L888 1327L888 1355L888 1384L886 1413M1043 1123L1070 1121L1095 1119L1120 1118L1144 1117L1167 1118L1191 1119L1217 1122L1244 1125L1272 1128L1301 1131L1329 1134L1355 1136L1381 1137L1405 1137L1429 1135L1455 1133L1481 1129M1198 929L1195 960L1191 989L1186 1017L1181 1043L1177 1068L1174 1093L1174 1118M1147 933L1143 967L1138 1000L1132 1030M1178 1058L1204 1060L1231 1062L1260 1064L1290 1067M1192 978L1217 978L1243 979L1271 981L1300 983M1185 1022L1210 1022L1238 1024M1242 1063L1239 1093L1239 1124M1239 1094L1264 1096L1288 1099M1304 937L1332 939L1358 940L1384 941L1409 942L1434 941L1461 939L1489 937M1304 836L1331 839L1357 842L1382 844L1405 845L1429 845L1454 845L1481 843M1417 719L1416 746L1416 772L1417 796L1419 821L1422 845M1298 756L1324 759L1349 763L1372 766L1394 768L1416 769M1397 718L1396 743L1396 768M1374 766L1375 792L1377 817L1379 844M1375 792L1396 794L1417 795M1416 760L1444 760L1474 759M1396 845L1398 875L1399 907L1399 942M1356 900L1378 902L1399 902M1454 845L1456 867L1458 891M1428 941L1427 974L1425 1006L1423 1037M1356 1008L1391 1009L1425 1007M1427 980L1457 978L1489 975M1362 1038L1360 1071L1358 1103L1359 1136M1332 1079L1331 1107L1332 1134M1276 1129L1278 1154L1282 1180L1286 1206L1290 1231L1295 1256L1298 1280L1301 1302L1302 1324L1301 1347L1299 1370L1296 1395M1174 1183L1200 1185L1227 1188L1255 1191L1284 1195M1302 1317L1332 1322L1360 1326L1387 1330L1412 1332L1437 1333L1463 1332L1490 1331M1403 1137L1405 1166L1408 1196L1411 1226L1414 1255L1417 1282L1418 1308L1419 1332M1294 1253L1327 1258L1359 1262L1388 1265L1415 1267M1357 1136L1359 1163L1362 1191M1340 1260L1345 1293L1347 1324M1415 1262L1438 1262L1462 1260L1487 1258M1436 1135L1437 1169L1440 1204M1373 1328L1372 1352L1369 1378L1365 1405M1411 1332L1410 1357L1407 1382L1403 1409M1372 1354L1391 1357L1410 1358M1488 984L1516 981L1545 978L1573 975L1599 973L1624 972L1648 972L1671 974L1695 976L1720 980L1746 984L1773 988L1798 992L1823 995L1846 998L1868 999L1890 1000M1527 754L1559 751L1589 749L1618 748M1575 800L1600 799L1624 798M1620 774L1645 774L1671 776L1698 777M1587 872L1589 897L1591 922L1592 948L1591 974M1489 926L1523 923L1558 920L1591 918M1667 873L1670 898L1672 923L1671 949L1670 974M1591 913L1619 912L1645 912L1671 914M1624 912L1625 942L1624 972M1671 920L1696 923L1720 926M1755 710L1758 742L1762 772L1767 801M1758 743L1793 745L1826 746M1826 747L1854 747L1881 745M1819 805L1824 835L1829 865L1832 897M1832 897L1833 930L1831 963L1826 996M1720 925L1755 930L1790 935M1790 954L1811 957L1831 959M1832 940L1865 943L1897 943M1481 1112L1508 1108L1535 1104L1561 1100L1586 1097L1609 1094L1632 1093L1654 1093L1676 1094L1700 1097L1725 1100L1751 1104L1777 1107L1801 1111L1825 1114L1848 1116L1871 1117M1741 983L1737 1007L1733 1030L1728 1053L1724 1076L1720 1099M1486 1029L1522 1024L1558 1020L1592 1016M1528 980L1527 1002L1525 1024M1549 1048L1569 1046L1588 1044M1591 1021L1621 1019L1649 1019M1696 976L1693 1001L1689 1025M1809 1056L1833 1059L1856 1061L1878 1062M1720 1099L1717 1125L1717 1153L1718 1182L1721 1212L1724 1241L1728 1269L1732 1296L1735 1323L1737 1349L1738 1376L1737 1404M1489 1280L1516 1276L1544 1273L1571 1269L1597 1266L1622 1263L1647 1262L1672 1261L1699 1262L1728 1264M1612 1094L1610 1121L1609 1149L1610 1178L1611 1207L1613 1236L1615 1264M1483 1200L1510 1196L1536 1192L1562 1188L1587 1184L1610 1182M1481 1153L1504 1149L1527 1146M1579 1098L1578 1126L1577 1155L1578 1186M1547 1190L1549 1232L1552 1272M1485 1231L1517 1226L1549 1222M1609 1159L1635 1158L1661 1158L1688 1159L1717 1162M1611 1201L1629 1199L1648 1199M1490 1339L1519 1336L1549 1333M1549 1341L1578 1338L1605 1336L1632 1334L1658 1333M1724 1237L1752 1239L1781 1241L1808 1244L1835 1245L1860 1246L1885 1246M1803 1111L1802 1136L1802 1162L1805 1189L1808 1216L1813 1244M1802 1150L1837 1154L1872 1155M1731 1291L1760 1293L1789 1295L1818 1297L1844 1298L1870 1298L1895 1298M1782 1242L1787 1269L1791 1295M1839 1367L1870 1367L1900 1366" stroke="#f8f7f3" stroke-width="5" fill="none" stroke-linejoin="round" stroke-linecap="round"/>
<path d="M220.6 850L218 973M218 940L275 958M273 859L275.5 978L284 1000M328 955L333 905L337 877L369 873M429 772L425 860L422 932M400 900L423 903M475 749L493 781L539 781M589 740L585 800L607 854L603 937M603 875L622 877M672 740L676 804L704 813L704 740M383 937L378 1100L374 1375M436 1056L436 973L447 964L481 964L490 973L490 1056L489 1130L498 1137L521 1151M432 1056L432 1169L453 1201L430 1240L432 1255M204 1214L260 1190L317 1169L430 1169L453 1201L521 1176L540 1168M204 1278L272 1246L367 1223M204 1270L215 1305L238 1318L367 1323L408 1334L453 1375M204 1097L227 1088L249 1128M204 1151L303 1110M256 994L281 1056L299 1090L322 1146L331 1214L340 1260M470 1190L494 1245M520 1370L521 1280M614 1119L655 1085L709 1088L741 1110L795 1097L840 1117L852 1126L890 1115L925 1122L950 1130M738 1119L709 1214L702 1260L714 1296L730 1340M852 1126L827 1169L822 1226L836 1255M790 1160L772 1232L779 1282L806 1316L840 1375M858 1282L908 1214L953 1187L1050 1187M818 1345L852 1300L875 1270M637 1122L657 1146M532 1160L580 1140L637 1122M646 980L659 1012L705 1026L841 1032L955 1041L1030 1041M620 990L646 980M575 1200L615 1235L640 1290L650 1375M990 1130L990 1270M1020 1130L1022 1270M960 1240L995 1265M1183 905L1160 935L1092 996L1060 1020M1183 916L1240 953M1315 740L1338 776L1354 814L1376 871L1410 939L1434 955L1479 973L1536 955L1570 939L1588 951L1650 1056L1665 1080M1602 887L1650 923L1672 962L1684 1007L1707 1019L1720 1056L1729 1100M1748 740L1745 928L1729 1056L1722 1100M1672 860L1700 840L1745 828M1707 903L1740 905M1475 740L1479 791L1536 891M1557 760L1602 864M1319 973L1342 964M1251 1003L1297 989M1182 1020L1223 1142L1250 1174L1318 1196L1375 1219L1397 1248L1409 1278L1434 1214M1409 1278L1440 1310L1470 1375M1434 1214L1470 1290L1502 1375M1250 1040L1280 1135M1282 1142L1363 1101L1409 1085L1434 1094M1268 1183L1255 1226L1262 1271L1295 1264L1341 1266L1386 1282L1409 1278M1352 1203L1375 1174L1397 1167M1273 1305L1296 1375M1329 1282L1363 1375M1463 1153L1513 1237L1509 1260L1472 1278M1495 1327L1560 1350L1626 1375M1486 1085L1531 1063M1524 1056L1547 1174L1581 1232L1592 1260M1592 1056L1649 1165L1678 1192L1712 1221M1484 1083L1524 1144L1570 1158L1638 1147L1653 1124L1651 1056M1705 1115L1705 1146L1735 1176M1545 1312L1658 1260M1581 1237L1622 1219M1760 1050L1800 1100L1850 1120M1740 1290L1800 1330L1850 1345M1345 750L1380 800M1440 1000L1460 1040M1610 800L1640 850M1290 1290L1330 1365" stroke="#45a045" stroke-width="10" fill="none" stroke-linejoin="round" stroke-linecap="round"/>
<path d="M220.6 850L218 973M218 940L275 958M273 859L275.5 978L284 1000M328 955L333 905L337 877L369 873M429 772L425 860L422 932M400 900L423 903M475 749L493 781L539 781M589 740L585 800L607 854L603 937M603 875L622 877M672 740L676 804L704 813L704 740M383 937L378 1100L374 1375M436 1056L436 973L447 964L481 964L490 973L490 1056L489 1130L498 1137L521 1151M432 1056L432 1169L453 1201L430 1240L432 1255M204 1214L260 1190L317 1169L430 1169L453 1201L521 1176L540 1168M204 1278L272 1246L367 1223M204 1270L215 1305L238 1318L367 1323L408 1334L453 1375M204 1097L227 1088L249 1128M204 1151L303 1110M256 994L281 1056L299 1090L322 1146L331 1214L340 1260M470 1190L494 1245M520 1370L521 1280M614 1119L655 1085L709 1088L741 1110L795 1097L840 1117L852 1126L890 1115L925 1122L950 1130M738 1119L709 1214L702 1260L714 1296L730 1340M852 1126L827 1169L822 1226L836 1255M790 1160L772 1232L779 1282L806 1316L840 1375M858 1282L908 1214L953 1187L1050 1187M818 1345L852 1300L875 1270M637 1122L657 1146M532 1160L580 1140L637 1122M646 980L659 1012L705 1026L841 1032L955 1041L1030 1041M620 990L646 980M575 1200L615 1235L640 1290L650 1375M990 1130L990 1270M1020 1130L1022 1270M960 1240L995 1265M1183 905L1160 935L1092 996L1060 1020M1183 916L1240 953M1315 740L1338 776L1354 814L1376 871L1410 939L1434 955L1479 973L1536 955L1570 939L1588 951L1650 1056L1665 1080M1602 887L1650 923L1672 962L1684 1007L1707 1019L1720 1056L1729 1100M1748 740L1745 928L1729 1056L1722 1100M1672 860L1700 840L1745 828M1707 903L1740 905M1475 740L1479 791L1536 891M1557 760L1602 864M1319 973L1342 964M1251 1003L1297 989M1182 1020L1223 1142L1250 1174L1318 1196L1375 1219L1397 1248L1409 1278L1434 1214M1409 1278L1440 1310L1470 1375M1434 1214L1470 1290L1502 1375M1250 1040L1280 1135M1282 1142L1363 1101L1409 1085L1434 1094M1268 1183L1255 1226L1262 1271L1295 1264L1341 1266L1386 1282L1409 1278M1352 1203L1375 1174L1397 1167M1273 1305L1296 1375M1329 1282L1363 1375M1463 1153L1513 1237L1509 1260L1472 1278M1495 1327L1560 1350L1626 1375M1486 1085L1531 1063M1524 1056L1547 1174L1581 1232L1592 1260M1592 1056L1649 1165L1678 1192L1712 1221M1484 1083L1524 1144L1570 1158L1638 1147L1653 1124L1651 1056M1705 1115L1705 1146L1735 1176M1545 1312L1658 1260M1581 1237L1622 1219M1760 1050L1800 1100L1850 1120M1740 1290L1800 1330L1850 1345M1345 750L1380 800M1440 1000L1460 1040M1610 800L1640 850M1290 1290L1330 1365" stroke="#f7f6f2" stroke-width="6" fill="none" stroke-linejoin="round" stroke-linecap="round"/>
<path d="M253 786L352 805M268 789L295 766L306 791M336 776L368 760M340 803L354 823L374 807M345 748L370 740M1183 916L1240 953M1160 1255L1175 1300L1170 1350M1175 1300L1230 1320L1260 1290M1100 1300L1060 1360" stroke="#e9dfc8" stroke-width="9" fill="none" stroke-linejoin="round" stroke-linecap="round"/>
<path d="M253 786L352 805M268 789L295 766L306 791M336 776L368 760M340 803L354 823L374 807M345 748L370 740M1183 916L1240 953M1160 1255L1175 1300L1170 1350M1175 1300L1230 1320L1260 1290M1100 1300L1060 1360" stroke="#fbfaf6" stroke-width="6" fill="none" stroke-linejoin="round" stroke-linecap="round"/>
<path d="M195 1020L300 975L381 934L420 932L614 939L728 944L787 948L830 958L875 973L955 991L1000 1000L1052 1008" stroke="#45a045" stroke-width="14" fill="none" stroke-linejoin="round" stroke-linecap="round"/>
<path d="M195 1020L300 975L381 934L420 932L614 939L728 944L787 948L830 958L875 973L955 991L1000 1000L1052 1008" stroke="#eed9a8" stroke-width="11" fill="none" stroke-linejoin="round" stroke-linecap="round"/>
<path d="M195 1020L300 975L381 934L420 932L614 939L728 944L787 948L830 958L875 973L955 991L1000 1000L1052 1008" stroke="#fffbea" stroke-width="8" fill="none" stroke-linejoin="round" stroke-linecap="round"/>
<path d="M1076 876L1064 900L1057 940L1054 1000L1049 1100L1047 1200L1045 1375M975 740C1010 780 1030 830 1062 862S1125 893 1185 890L1230 875L1300 848L1461 797L1552 754L1600 728" stroke="#288c28" stroke-width="19" fill="none" stroke-linejoin="round" stroke-linecap="round"/>
<path d="M1076 876L1064 900L1057 940L1054 1000L1049 1100L1047 1200L1045 1375M975 740C1010 780 1030 830 1062 862S1125 893 1185 890L1230 875L1300 848L1461 797L1552 754L1600 728" stroke="#eed9a8" stroke-width="15" fill="none" stroke-linejoin="round" stroke-linecap="round"/>
<path d="M1076 876L1064 900L1057 940L1054 1000L1049 1100L1047 1200L1045 1375M975 740C1010 780 1030 830 1062 862S1125 893 1185 890L1230 875L1300 848L1461 797L1552 754L1600 728" stroke="#fffbe6" stroke-width="12" fill="none" stroke-linejoin="round" stroke-linecap="round"/>
<path d="M1672 1375L1701 1282L1735 1183L1762 1160L1780 1150" stroke="#eed9a8" stroke-width="11" fill="none" stroke-linejoin="round"/>
<path d="M1672 1375L1701 1282L1735 1183L1762 1160L1780 1150" stroke="#fffbe6" stroke-width="7" fill="none" stroke-linejoin="round"/>
<path d="M525 973L1502 1016L1408 1297L525 1297Z" fill="rgb(0,255,0)" fill-opacity="0.35" stroke="#22ee22" stroke-width="3.5"/>
<g font-family="Liberation Sans" font-size="20" fill="#5a5a5a" text-anchor="middle" dominant-baseline="central" stroke="#fff" stroke-width="3" stroke-opacity="0.85" paint-order="stroke"><text x="220" y="900" transform="rotate(-90 220 900)">Reston Ct</text><text x="276" y="925" transform="rotate(90 276 925)">Saybrook Ln</text><text x="322" y="913" transform="rotate(-78 322 913)">Wilkinson</text><text x="354" y="866" transform="rotate(0 354 866)">Rd</text><text x="420" y="845" transform="rotate(-84 420 845)">Hearthstone Ln</text><text x="604" y="832" transform="rotate(-78 604 832)">Turnberry Dr</text><text x="596" y="767" transform="rotate(80 596 767)">Dr</text><text x="680" y="790" transform="rotate(72 680 790)">Durham Rd</text><text x="895" y="972" transform="rotate(16 895 972)">Bob Gray Rd</text><text x="292" y="1037" transform="rotate(68 292 1037)">Delray Rd</text><text x="486" y="1052" transform="rotate(-90 486 1052)">Laurel Hill Rd</text><text x="365" y="1165" transform="rotate(0 365 1165)">Venice Rd</text><text x="254" y="1253" transform="rotate(-24 254 1253)">Panama Dr</text><text x="505" y="1335" transform="rotate(-90 505 1335)">Suwannee Rd</text><text x="800" y="1098" transform="rotate(20 800 1098)">Needles Dr</text><text x="776" y="1266" transform="rotate(68 776 1266)">Swaps Ln</text><text x="1210" y="1072" transform="rotate(70 1210 1072)">Sunnydale Rd</text><text x="1438" y="1330" transform="rotate(70 1438 1330)">Sunnydale Rd</text><text x="1190" y="887" transform="rotate(-17 1190 887)">Middlebrook Pike NW</text><text x="1631" y="1003" transform="rotate(62 1631 1003)">Sky Blue Dr</text><text x="1658" y="962" transform="rotate(57 1658 962)">Farne Island Blvd</text><text x="1750" y="795" transform="rotate(90 1750 795)">Parrish Rd</text><text x="1738" y="940" transform="rotate(-82 1738 940)">Parrish Rd</text><text x="1556" y="1128" transform="rotate(80 1556 1128)">Owl Hollow Rd</text><text x="1608" y="1125" transform="rotate(68 1608 1125)">Crest Forest Rd</text><text x="1590" y="1288" transform="rotate(-25 1590 1288)">Ormand Ln</text><text x="1560" y="1333" transform="rotate(20 1560 1333)">Belle Glade Ln</text><text x="1706" y="1290" transform="rotate(-72 1706 1290)">Fox Lonas Rd</text><text x="1790" y="1310" transform="rotate(52 1790 1310)">Dorset Dr</text><text x="1356" y="1350" transform="rotate(78 1356 1350)">Ferry Rd</text><text x="1432" y="762" transform="rotate(80 1432 762)">Rd</text><text x="1590" y="738" transform="rotate(-25 1590 738)">Middlebrook</text></g>
<g font-family="Liberation Sans" font-size="27" fill="#444" text-anchor="middle" dominant-baseline="central" stroke="#fff" stroke-width="3" stroke-opacity="0.7" paint-order="stroke"><text x="552" y="1208">Belmont West</text><text x="363" y="1350">Gulf Park</text><text x="1521" y="953">Hidden</text><text x="1521" y="983">Valley</text></g>
<rect x="1463" y="768" width="42" height="28" rx="6" fill="#fff" stroke="#777" stroke-width="2"/>
<text x="1484" y="783" font-family="Liberation Sans" font-weight="bold" font-size="18" fill="#222" text-anchor="middle" dominant-baseline="central">169</text>
<rect x="1351" y="813" width="42" height="28" rx="6" fill="#fff" stroke="#777" stroke-width="2"/>
<text x="1372" y="828" font-family="Liberation Sans" font-weight="bold" font-size="18" fill="#222" text-anchor="middle" dominant-baseline="central">169</text>
<rect x="920" y="1123" width="120" height="40" fill="#fff"/>
<text x="980" y="1143" font-family="Liberation Sans" font-weight="bold" font-size="24" fill="#1a8a1a" text-anchor="middle" dominant-baseline="central">277.84 ac</text>
<circle cx="707" cy="1107" r="21" fill="#fcbe00"/>
<text x="707" y="1108" font-family="Liberation Sans" font-weight="bold" font-size="26" fill="#fff" text-anchor="middle" dominant-baseline="central">8</text>
<circle cx="610.5" cy="1148" r="21" fill="#fcbe00"/>
<text x="610.5" y="1149" font-family="Liberation Sans" font-weight="bold" font-size="26" fill="#fff" text-anchor="middle" dominant-baseline="central">6</text>
<circle cx="836" cy="1276" r="21" fill="#fcbe00"/>
<text x="836" y="1277" font-family="Liberation Sans" font-weight="bold" font-size="26" fill="#fff" text-anchor="middle" dominant-baseline="central">7</text>
<circle cx="1265" cy="1162" r="21" fill="#fcbe00"/>
<text x="1265" y="1163" font-family="Liberation Sans" font-weight="bold" font-size="26" fill="#fff" text-anchor="middle" dominant-baseline="central">3</text>
<circle cx="1400" cy="1185" r="21" fill="#fcbe00"/>
<text x="1400" y="1186" font-family="Liberation Sans" font-weight="bold" font-size="26" fill="#fff" text-anchor="middle" dominant-baseline="central">2</text>
<circle cx="1441" cy="1150" r="21" fill="#fcbe00"/>
<text x="1441" y="1151" font-family="Liberation Sans" font-weight="bold" font-size="26" fill="#fff" text-anchor="middle" dominant-baseline="central">4</text>
<circle cx="1428" cy="1072" r="21" fill="#fcbe00"/>
<text x="1428" y="1073" font-family="Liberation Sans" font-weight="bold" font-size="26" fill="#fff" text-anchor="middle" dominant-baseline="central">5</text>
<circle cx="1286" cy="1292" r="21" fill="#fcbe00"/>
<text x="1286" y="1293" font-family="Liberation Sans" font-weight="bold" font-size="26" fill="#fff" text-anchor="middle" dominant-baseline="central">1</text>
<circle cx="945" cy="1215" r="21" fill="#000"/>
<text x="945" y="1216" font-family="Liberation Sans" font-weight="bold" font-size="26" fill="#fff" text-anchor="middle" dominant-baseline="central">S</text>
</g>
<rect x="1764" y="746" width="83" height="139" fill="rgb(110,165,230)" fill-opacity="0.75"/>
<text x="1830" y="805" transform="rotate(-82 1830 805)" font-family="Liberation Sans" font-size="20" fill="#5a6a88" fill-opacity="0.8" text-anchor="middle" dominant-baseline="central">Corning Rd</text>
<rect x="1764" y="885" width="83" height="403" fill="rgb(85,100,125)" fill-opacity="0.85"/>
<rect x="1764" y="964" width="83" height="2" fill="#e8ecf0"/>
<rect x="1764" y="1046" width="83" height="2" fill="#e8ecf0"/>
<rect x="1764" y="1127" width="83" height="2" fill="#e8ecf0"/>
<rect x="1764" y="1208" width="83" height="2" fill="#e8ecf0"/>
<path d="M1791 780H1818M1804.5 766.5V793.5" stroke="#fff" stroke-width="5"/>
<path d="M1797 854.5H1812" stroke="#fff" stroke-width="5"/>
<path d="M1796 907L1804 899L1812 907Z" fill="#f5b800"/>
<text x="1805" y="929" font-family="Liberation Sans" font-weight="bold" font-size="22" fill="#fff" text-anchor="middle" dominant-baseline="central">N</text>
<path d="M1784 929L1790 923V935Z M1826 929L1820 923V935Z M1798 949L1804 955L1810 949Z" fill="#fff"/>
<g fill="#fff"><rect x="1803.5" y="984" width="7" height="8" transform="rotate(0 1807 1005)"/><rect x="1803.5" y="984" width="7" height="8" transform="rotate(45 1807 1005)"/><rect x="1803.5" y="984" width="7" height="8" transform="rotate(90 1807 1005)"/><rect x="1803.5" y="984" width="7" height="8" transform="rotate(135 1807 1005)"/><rect x="1803.5" y="984" width="7" height="8" transform="rotate(180 1807 1005)"/><rect x="1803.5" y="984" width="7" height="8" transform="rotate(225 1807 1005)"/><rect x="1803.5" y="984" width="7" height="8" transform="rotate(270 1807 1005)"/><rect x="1803.5" y="984" width="7" height="8" transform="rotate(315 1807 1005)"/><circle cx="1807" cy="1005" r="15"/></g>
<circle cx="1807" cy="1005" r="9" fill="rgb(100,112,135)"/>
<path d="M1803 1104C1796 1093 1790 1086 1790 1079A13 13 0 0 1 1816 1079C1816 1086 1810 1093 1803 1104Z" fill="#fff"/>
<circle cx="1803" cy="1078" r="5" fill="rgb(100,112,135)"/>
<circle cx="1799" cy="1164" r="15" fill="none" stroke="#fff" stroke-width="2.5"/>
<path d="M1810 1175L1825 1190" stroke="#fff" stroke-width="5" stroke-linecap="round"/>
<path d="M1785 1246H1830V1258H1785Z" fill="#fff"/>
<path d="M1791 1246V1252M1797 1246V1252M1803 1246V1252M1809 1246V1252M1815 1246V1252M1821 1246V1252" stroke="rgb(100,112,135)" stroke-width="2"/>
<path d="M1786 1230L1796 1240L1788 1242Z" fill="#fff"/>
</svg>
<!--MAPEND-->

</body></html>
